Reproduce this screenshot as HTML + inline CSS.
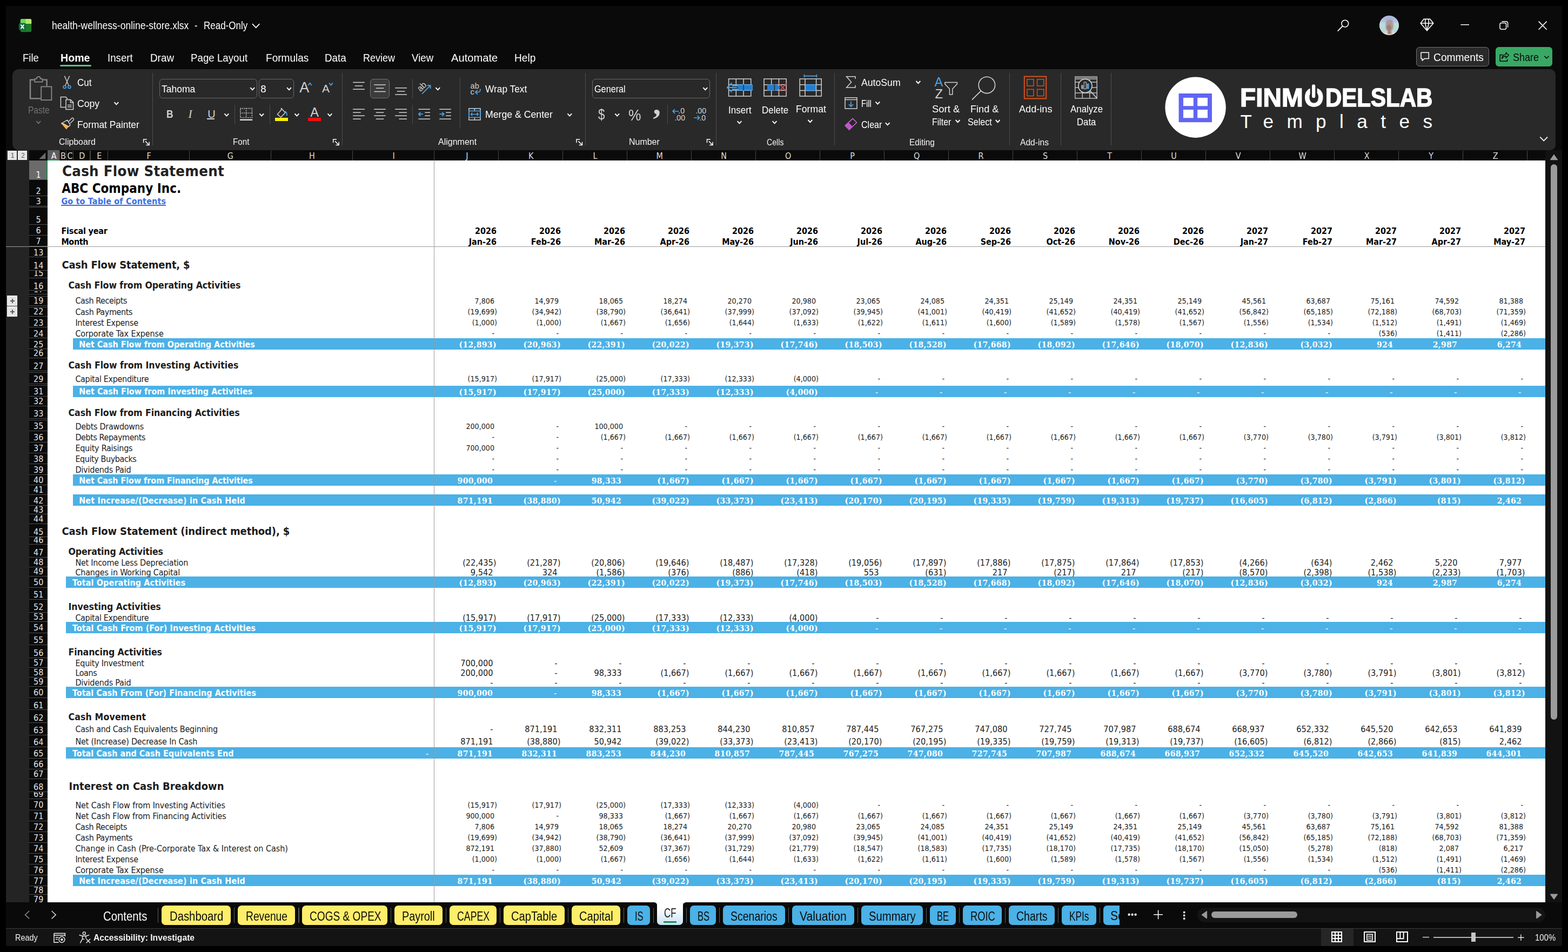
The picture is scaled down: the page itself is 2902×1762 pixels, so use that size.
<!DOCTYPE html>
<html lang="en"><head><meta charset="utf-8"><title>health-wellness-online-store.xlsx - Excel</title>
<style>
html,body{margin:0;padding:0;background:#000;}
body{width:2902px;height:1762px;overflow:hidden;position:relative;font-family:"Liberation Sans",sans-serif;}
#app div{position:absolute;white-space:pre;color:#fff;}
#app .t{font-family:"DejaVu Sans Condensed","Liberation Sans",sans-serif;}
#app .s{font-family:"DejaVu Serif Condensed","Liberation Serif",serif;}
#app .b{font-weight:700;}
#app svg{position:absolute;left:0;top:0;overflow:visible;}
#app{position:absolute;left:0;top:0;width:2902px;height:1762px;overflow:hidden;}

</style></head><body><div id="app">
<div style="left:11px;top:11px;width:2880px;height:1740px;background:#0a0a0a;"></div>
<div style="left:11px;top:278px;width:43px;height:1392px;background:#242424;"></div>
<div style="left:54px;top:278px;width:2808px;height:19px;background:#0a0a0a;"></div>
<div style="left:54px;top:297px;width:34px;height:1373px;background:#0a0a0a;"></div>
<div style="left:88px;top:278px;width:22px;height:19px;background:#5f5f5f;"></div>
<div style="left:88px;top:295px;width:22px;height:2px;background:#1f8a55;"></div>
<div class="t" style="left:94.68px;top:279px;line-height:19px;font-size:16px;">A</div>
<div style="left:109.4px;top:279px;width:1.2px;height:18px;background:#4a4a4a;"></div>
<div class="t" style="left:111.91px;top:279px;line-height:19px;font-size:16px;color:#dedede;">B</div>
<div style="left:121.9px;top:279px;width:1.2px;height:18px;background:#4a4a4a;"></div>
<div class="t" style="left:124.57px;top:279px;line-height:19px;font-size:16px;color:#dedede;">C</div>
<div style="left:134.9px;top:279px;width:1.2px;height:18px;background:#4a4a4a;"></div>
<div class="t" style="left:146.31px;top:279px;line-height:19px;font-size:16px;color:#dedede;">D</div>
<div style="left:166.4px;top:279px;width:1.2px;height:18px;background:#4a4a4a;"></div>
<div class="t" style="left:179.3px;top:279px;line-height:19px;font-size:16px;color:#dedede;">E</div>
<div style="left:198.9px;top:279px;width:1.2px;height:18px;background:#4a4a4a;"></div>
<div class="t" style="left:271.41px;top:279px;line-height:19px;font-size:16px;color:#dedede;">F</div>
<div style="left:349.8px;top:279px;width:1.2px;height:18px;background:#4a4a4a;"></div>
<div class="t" style="left:420.87px;top:279px;line-height:19px;font-size:16px;color:#dedede;">G</div>
<div style="left:500.7px;top:279px;width:1.2px;height:18px;background:#4a4a4a;"></div>
<div class="t" style="left:571.99px;top:279px;line-height:19px;font-size:16px;color:#dedede;">H</div>
<div style="left:651.7px;top:279px;width:1.2px;height:18px;background:#4a4a4a;"></div>
<div class="t" style="left:726.38px;top:279px;line-height:19px;font-size:16px;color:#dedede;">I</div>
<div style="left:802.9px;top:279px;width:1.2px;height:18px;background:#4a4a4a;"></div>
<div class="t" style="left:862.21px;top:279px;line-height:19px;font-size:16px;color:#dedede;">J</div>
<div style="left:921.9px;top:279px;width:1.2px;height:18px;background:#4a4a4a;"></div>
<div class="t" style="left:977.88px;top:279px;line-height:19px;font-size:16px;color:#dedede;">K</div>
<div style="left:1040.9px;top:279px;width:1.2px;height:18px;background:#4a4a4a;"></div>
<div class="t" style="left:1097.59px;top:279px;line-height:19px;font-size:16px;color:#dedede;">L</div>
<div style="left:1159.9px;top:279px;width:1.2px;height:18px;background:#4a4a4a;"></div>
<div class="t" style="left:1214.39px;top:279px;line-height:19px;font-size:16px;color:#dedede;">M</div>
<div style="left:1278.9px;top:279px;width:1.2px;height:18px;background:#4a4a4a;"></div>
<div class="t" style="left:1334.22px;top:279px;line-height:19px;font-size:16px;color:#dedede;">N</div>
<div style="left:1397.9px;top:279px;width:1.2px;height:18px;background:#4a4a4a;"></div>
<div class="t" style="left:1452.94px;top:279px;line-height:19px;font-size:16px;color:#dedede;">O</div>
<div style="left:1516.9px;top:279px;width:1.2px;height:18px;background:#4a4a4a;"></div>
<div class="t" style="left:1573.26px;top:279px;line-height:19px;font-size:16px;color:#dedede;">P</div>
<div style="left:1635.9px;top:279px;width:1.2px;height:18px;background:#4a4a4a;"></div>
<div class="t" style="left:1690.94px;top:279px;line-height:19px;font-size:16px;color:#dedede;">Q</div>
<div style="left:1754.9px;top:279px;width:1.2px;height:18px;background:#4a4a4a;"></div>
<div class="t" style="left:1810.6px;top:279px;line-height:19px;font-size:16px;color:#dedede;">R</div>
<div style="left:1873.9px;top:279px;width:1.2px;height:18px;background:#4a4a4a;"></div>
<div class="t" style="left:1930.03px;top:279px;line-height:19px;font-size:16px;color:#dedede;">S</div>
<div style="left:1992.9px;top:279px;width:1.2px;height:18px;background:#4a4a4a;"></div>
<div class="t" style="left:2049.24px;top:279px;line-height:19px;font-size:16px;color:#dedede;">T</div>
<div style="left:2111.9px;top:279px;width:1.2px;height:18px;background:#4a4a4a;"></div>
<div class="t" style="left:2167.33px;top:279px;line-height:19px;font-size:16px;color:#dedede;">U</div>
<div style="left:2230.9px;top:279px;width:1.2px;height:18px;background:#4a4a4a;"></div>
<div class="t" style="left:2286.68px;top:279px;line-height:19px;font-size:16px;color:#dedede;">V</div>
<div style="left:2349.9px;top:279px;width:1.2px;height:18px;background:#4a4a4a;"></div>
<div class="t" style="left:2403.48px;top:279px;line-height:19px;font-size:16px;color:#dedede;">W</div>
<div style="left:2468.9px;top:279px;width:1.2px;height:18px;background:#4a4a4a;"></div>
<div class="t" style="left:2524.67px;top:279px;line-height:19px;font-size:16px;color:#dedede;">X</div>
<div style="left:2587.9px;top:279px;width:1.2px;height:18px;background:#4a4a4a;"></div>
<div class="t" style="left:2644.23px;top:279px;line-height:19px;font-size:16px;color:#dedede;">Y</div>
<div style="left:2706.9px;top:279px;width:1.2px;height:18px;background:#4a4a4a;"></div>
<div class="t" style="left:2762.67px;top:279px;line-height:19px;font-size:16px;color:#dedede;">Z</div>
<div style="left:2825.9px;top:279px;width:1.2px;height:18px;background:#4a4a4a;"></div>
<div style="left:2861.4px;top:279px;width:1.2px;height:18px;background:#4a4a4a;"></div>
<div style="left:54px;top:297px;width:34px;height:36px;background:#6b6b6b;overflow:hidden"><div class="t" style="left:12.62px;top:17px;line-height:19px;font-size:16px;color:#fff">1</div></div>
<div style="left:54px;top:332px;width:34px;height:1px;background:#4e4e4e;"></div>
<div style="left:54px;top:333px;width:34px;height:30px;background:#0a0a0a;overflow:hidden"><div class="t" style="left:12.62px;top:11px;line-height:19px;font-size:16px;color:#e2e2e2">2</div></div>
<div style="left:54px;top:362px;width:34px;height:1px;background:#4e4e4e;"></div>
<div style="left:54px;top:363px;width:34px;height:19px;background:#0a0a0a;overflow:hidden"><div class="t" style="left:12.62px;top:0px;line-height:19px;font-size:16px;color:#e2e2e2">3</div></div>
<div style="left:54px;top:381px;width:34px;height:1px;background:#4e4e4e;"></div>
<div style="left:54px;top:382px;width:34px;height:2.5px;background:#0a0a0a;overflow:hidden"></div>
<div style="left:54px;top:383px;width:34px;height:1px;background:#4e4e4e;"></div>
<div style="left:54px;top:384.5px;width:34px;height:31.5px;background:#0a0a0a;overflow:hidden"><div class="t" style="left:12.62px;top:12.5px;line-height:19px;font-size:16px;color:#e2e2e2">5</div></div>
<div style="left:54px;top:415px;width:34px;height:1px;background:#4e4e4e;"></div>
<div style="left:54px;top:416px;width:34px;height:20px;background:#0a0a0a;overflow:hidden"><div class="t" style="left:12.62px;top:1px;line-height:19px;font-size:16px;color:#e2e2e2">6</div></div>
<div style="left:54px;top:435px;width:34px;height:1px;background:#4e4e4e;"></div>
<div style="left:54px;top:436px;width:34px;height:20px;background:#0a0a0a;overflow:hidden"><div class="t" style="left:12.62px;top:1px;line-height:19px;font-size:16px;color:#e2e2e2">7</div></div>
<div style="left:54px;top:455px;width:34px;height:1px;background:#4e4e4e;"></div>
<div style="left:54px;top:457px;width:34px;height:19.5px;background:#0a0a0a;overflow:hidden"><div class="t" style="left:8.04px;top:0.5px;line-height:19px;font-size:16px;color:#e2e2e2">13</div></div>
<div style="left:54px;top:475px;width:34px;height:1px;background:#4e4e4e;"></div>
<div style="left:54px;top:476.5px;width:34px;height:24.5px;background:#0a0a0a;overflow:hidden"><div class="t" style="left:8.04px;top:5.5px;line-height:19px;font-size:16px;color:#e2e2e2">14</div></div>
<div style="left:54px;top:500px;width:34px;height:1px;background:#4e4e4e;"></div>
<div style="left:54px;top:501px;width:34px;height:14px;background:#0a0a0a;overflow:hidden"><div class="t" style="left:8.04px;top:-5px;line-height:19px;font-size:16px;color:#e2e2e2">15</div></div>
<div style="left:54px;top:514px;width:34px;height:1px;background:#4e4e4e;"></div>
<div style="left:54px;top:515px;width:34px;height:23.5px;background:#0a0a0a;overflow:hidden"><div class="t" style="left:8.04px;top:4.5px;line-height:19px;font-size:16px;color:#e2e2e2">16</div></div>
<div style="left:54px;top:537px;width:34px;height:1px;background:#4e4e4e;"></div>
<div style="left:54px;top:538.5px;width:34px;height:6.5px;background:#0a0a0a;overflow:hidden"><div class="t" style="left:8.04px;top:-12.5px;line-height:19px;font-size:16px;color:#e2e2e2">17</div></div>
<div style="left:54px;top:544px;width:34px;height:1px;background:#4e4e4e;"></div>
<div style="left:54px;top:546px;width:34px;height:20.3px;background:#0a0a0a;overflow:hidden"><div class="t" style="left:8.04px;top:1.3px;line-height:19px;font-size:16px;color:#e2e2e2">19</div></div>
<div style="left:54px;top:565px;width:34px;height:1px;background:#4e4e4e;"></div>
<div style="left:54px;top:566.3px;width:34px;height:20.2px;background:#0a0a0a;overflow:hidden"><div class="t" style="left:8.04px;top:1.2px;line-height:19px;font-size:16px;color:#e2e2e2">22</div></div>
<div style="left:54px;top:585px;width:34px;height:1px;background:#4e4e4e;"></div>
<div style="left:54px;top:586.5px;width:34px;height:20px;background:#0a0a0a;overflow:hidden"><div class="t" style="left:8.04px;top:1px;line-height:19px;font-size:16px;color:#e2e2e2">23</div></div>
<div style="left:54px;top:605px;width:34px;height:1px;background:#4e4e4e;"></div>
<div style="left:54px;top:606.5px;width:34px;height:20px;background:#0a0a0a;overflow:hidden"><div class="t" style="left:8.04px;top:1px;line-height:19px;font-size:16px;color:#e2e2e2">24</div></div>
<div style="left:54px;top:625px;width:34px;height:1px;background:#4e4e4e;"></div>
<div style="left:54px;top:626.5px;width:34px;height:20px;background:#0a0a0a;overflow:hidden"><div class="t" style="left:8.04px;top:1px;line-height:19px;font-size:16px;color:#e2e2e2">25</div></div>
<div style="left:54px;top:645px;width:34px;height:1px;background:#4e4e4e;"></div>
<div style="left:54px;top:646.5px;width:34px;height:16.9px;background:#0a0a0a;overflow:hidden"><div class="t" style="left:8.04px;top:-2.1px;line-height:19px;font-size:16px;color:#e2e2e2">26</div></div>
<div style="left:54px;top:662px;width:34px;height:1px;background:#4e4e4e;"></div>
<div style="left:54px;top:663.4px;width:34px;height:23.8px;background:#0a0a0a;overflow:hidden"><div class="t" style="left:8.04px;top:4.8px;line-height:19px;font-size:16px;color:#e2e2e2">27</div></div>
<div style="left:54px;top:686px;width:34px;height:1px;background:#4e4e4e;"></div>
<div style="left:54px;top:687.2px;width:34px;height:3.3px;background:#0a0a0a;overflow:hidden"></div>
<div style="left:54px;top:689px;width:34px;height:1px;background:#4e4e4e;"></div>
<div style="left:54px;top:690.5px;width:34px;height:20.1px;background:#0a0a0a;overflow:hidden"><div class="t" style="left:8.04px;top:1.1px;line-height:19px;font-size:16px;color:#e2e2e2">29</div></div>
<div style="left:54px;top:710px;width:34px;height:1px;background:#4e4e4e;"></div>
<div style="left:54px;top:710.6px;width:34px;height:3.7px;background:#0a0a0a;overflow:hidden"></div>
<div style="left:54px;top:713px;width:34px;height:1px;background:#4e4e4e;"></div>
<div style="left:54px;top:714.3px;width:34px;height:20.2px;background:#0a0a0a;overflow:hidden"><div class="t" style="left:8.04px;top:1.2px;line-height:19px;font-size:16px;color:#e2e2e2">31</div></div>
<div style="left:54px;top:733px;width:34px;height:1px;background:#4e4e4e;"></div>
<div style="left:54px;top:734.5px;width:34px;height:17.1px;background:#0a0a0a;overflow:hidden"><div class="t" style="left:8.04px;top:-1.9px;line-height:19px;font-size:16px;color:#e2e2e2">32</div></div>
<div style="left:54px;top:751px;width:34px;height:1px;background:#4e4e4e;"></div>
<div style="left:54px;top:751.6px;width:34px;height:23.1px;background:#0a0a0a;overflow:hidden"><div class="t" style="left:8.04px;top:4.1px;line-height:19px;font-size:16px;color:#e2e2e2">33</div></div>
<div style="left:54px;top:774px;width:34px;height:1px;background:#4e4e4e;"></div>
<div style="left:54px;top:774.7px;width:34px;height:3.7px;background:#0a0a0a;overflow:hidden"></div>
<div style="left:54px;top:777px;width:34px;height:1px;background:#4e4e4e;"></div>
<div style="left:54px;top:778.4px;width:34px;height:20.1px;background:#0a0a0a;overflow:hidden"><div class="t" style="left:8.04px;top:1.1px;line-height:19px;font-size:16px;color:#e2e2e2">35</div></div>
<div style="left:54px;top:797px;width:34px;height:1px;background:#4e4e4e;"></div>
<div style="left:54px;top:798.5px;width:34px;height:20.2px;background:#0a0a0a;overflow:hidden"><div class="t" style="left:8.04px;top:1.2px;line-height:19px;font-size:16px;color:#e2e2e2">36</div></div>
<div style="left:54px;top:818px;width:34px;height:1px;background:#4e4e4e;"></div>
<div style="left:54px;top:818.7px;width:34px;height:20px;background:#0a0a0a;overflow:hidden"><div class="t" style="left:8.04px;top:1px;line-height:19px;font-size:16px;color:#e2e2e2">37</div></div>
<div style="left:54px;top:838px;width:34px;height:1px;background:#4e4e4e;"></div>
<div style="left:54px;top:838.7px;width:34px;height:20px;background:#0a0a0a;overflow:hidden"><div class="t" style="left:8.04px;top:1px;line-height:19px;font-size:16px;color:#e2e2e2">38</div></div>
<div style="left:54px;top:858px;width:34px;height:1px;background:#4e4e4e;"></div>
<div style="left:54px;top:858.7px;width:34px;height:19.9px;background:#0a0a0a;overflow:hidden"><div class="t" style="left:8.04px;top:0.9px;line-height:19px;font-size:16px;color:#e2e2e2">39</div></div>
<div style="left:54px;top:878px;width:34px;height:1px;background:#4e4e4e;"></div>
<div style="left:54px;top:878.6px;width:34px;height:19.9px;background:#0a0a0a;overflow:hidden"><div class="t" style="left:8.04px;top:0.9px;line-height:19px;font-size:16px;color:#e2e2e2">40</div></div>
<div style="left:54px;top:897px;width:34px;height:1px;background:#4e4e4e;"></div>
<div style="left:54px;top:898.5px;width:34px;height:17.1px;background:#0a0a0a;overflow:hidden"><div class="t" style="left:8.04px;top:-1.9px;line-height:19px;font-size:16px;color:#e2e2e2">41</div></div>
<div style="left:54px;top:915px;width:34px;height:1px;background:#4e4e4e;"></div>
<div style="left:54px;top:915.6px;width:34px;height:20.1px;background:#0a0a0a;overflow:hidden"><div class="t" style="left:8.04px;top:1.1px;line-height:19px;font-size:16px;color:#e2e2e2">42</div></div>
<div style="left:54px;top:935px;width:34px;height:1px;background:#4e4e4e;"></div>
<div style="left:54px;top:935.7px;width:34px;height:16.8px;background:#0a0a0a;overflow:hidden"><div class="t" style="left:8.04px;top:-2.2px;line-height:19px;font-size:16px;color:#e2e2e2">43</div></div>
<div style="left:54px;top:951px;width:34px;height:1px;background:#4e4e4e;"></div>
<div style="left:54px;top:952.5px;width:34px;height:17px;background:#0a0a0a;overflow:hidden"><div class="t" style="left:8.04px;top:-2px;line-height:19px;font-size:16px;color:#e2e2e2">44</div></div>
<div style="left:54px;top:969px;width:34px;height:1px;background:#4e4e4e;"></div>
<div style="left:54px;top:969.5px;width:34px;height:24.4px;background:#0a0a0a;overflow:hidden"><div class="t" style="left:8.04px;top:5.4px;line-height:19px;font-size:16px;color:#e2e2e2">45</div></div>
<div style="left:54px;top:993px;width:34px;height:1px;background:#4e4e4e;"></div>
<div style="left:54px;top:993.9px;width:34px;height:14.6px;background:#0a0a0a;overflow:hidden"><div class="t" style="left:8.04px;top:-4.4px;line-height:19px;font-size:16px;color:#e2e2e2">46</div></div>
<div style="left:54px;top:1007px;width:34px;height:1px;background:#4e4e4e;"></div>
<div style="left:54px;top:1008.5px;width:34px;height:23px;background:#0a0a0a;overflow:hidden"><div class="t" style="left:8.04px;top:4px;line-height:19px;font-size:16px;color:#e2e2e2">47</div></div>
<div style="left:54px;top:1031px;width:34px;height:1px;background:#4e4e4e;"></div>
<div style="left:54px;top:1031.5px;width:34px;height:18px;background:#0a0a0a;overflow:hidden"><div class="t" style="left:8.04px;top:-1px;line-height:19px;font-size:16px;color:#e2e2e2">48</div></div>
<div style="left:54px;top:1049px;width:34px;height:1px;background:#4e4e4e;"></div>
<div style="left:54px;top:1049.5px;width:34px;height:17.9px;background:#0a0a0a;overflow:hidden"><div class="t" style="left:8.04px;top:-1.1px;line-height:19px;font-size:16px;color:#e2e2e2">49</div></div>
<div style="left:54px;top:1066px;width:34px;height:1px;background:#4e4e4e;"></div>
<div style="left:54px;top:1067.4px;width:34px;height:20.1px;background:#0a0a0a;overflow:hidden"><div class="t" style="left:8.04px;top:1.1px;line-height:19px;font-size:16px;color:#e2e2e2">50</div></div>
<div style="left:54px;top:1087px;width:34px;height:1px;background:#4e4e4e;"></div>
<div style="left:54px;top:1087.5px;width:34px;height:22.8px;background:#0a0a0a;overflow:hidden"><div class="t" style="left:8.04px;top:3.8px;line-height:19px;font-size:16px;color:#e2e2e2">51</div></div>
<div style="left:54px;top:1109px;width:34px;height:1px;background:#4e4e4e;"></div>
<div style="left:54px;top:1110.3px;width:34px;height:23.2px;background:#0a0a0a;overflow:hidden"><div class="t" style="left:8.04px;top:4.2px;line-height:19px;font-size:16px;color:#e2e2e2">52</div></div>
<div style="left:54px;top:1133px;width:34px;height:1px;background:#4e4e4e;"></div>
<div style="left:54px;top:1133.5px;width:34px;height:17.8px;background:#0a0a0a;overflow:hidden"><div class="t" style="left:8.04px;top:-1.2px;line-height:19px;font-size:16px;color:#e2e2e2">53</div></div>
<div style="left:54px;top:1150px;width:34px;height:1px;background:#4e4e4e;"></div>
<div style="left:54px;top:1151.3px;width:34px;height:20.2px;background:#0a0a0a;overflow:hidden"><div class="t" style="left:8.04px;top:1.2px;line-height:19px;font-size:16px;color:#e2e2e2">54</div></div>
<div style="left:54px;top:1171px;width:34px;height:1px;background:#4e4e4e;"></div>
<div style="left:54px;top:1171.5px;width:34px;height:22.9px;background:#0a0a0a;overflow:hidden"><div class="t" style="left:8.04px;top:3.9px;line-height:19px;font-size:16px;color:#e2e2e2">55</div></div>
<div style="left:54px;top:1193px;width:34px;height:1px;background:#4e4e4e;"></div>
<div style="left:54px;top:1194.4px;width:34px;height:23.2px;background:#0a0a0a;overflow:hidden"><div class="t" style="left:8.04px;top:4.2px;line-height:19px;font-size:16px;color:#e2e2e2">56</div></div>
<div style="left:54px;top:1217px;width:34px;height:1px;background:#4e4e4e;"></div>
<div style="left:54px;top:1217.6px;width:34px;height:18.1px;background:#0a0a0a;overflow:hidden"><div class="t" style="left:8.04px;top:-0.9px;line-height:19px;font-size:16px;color:#e2e2e2">57</div></div>
<div style="left:54px;top:1235px;width:34px;height:1px;background:#4e4e4e;"></div>
<div style="left:54px;top:1235.7px;width:34px;height:17.9px;background:#0a0a0a;overflow:hidden"><div class="t" style="left:8.04px;top:-1.1px;line-height:19px;font-size:16px;color:#e2e2e2">58</div></div>
<div style="left:54px;top:1253px;width:34px;height:1px;background:#4e4e4e;"></div>
<div style="left:54px;top:1253.6px;width:34px;height:17.7px;background:#0a0a0a;overflow:hidden"><div class="t" style="left:8.04px;top:-1.3px;line-height:19px;font-size:16px;color:#e2e2e2">59</div></div>
<div style="left:54px;top:1270px;width:34px;height:1px;background:#4e4e4e;"></div>
<div style="left:54px;top:1271.3px;width:34px;height:20.2px;background:#0a0a0a;overflow:hidden"><div class="t" style="left:8.04px;top:1.2px;line-height:19px;font-size:16px;color:#e2e2e2">60</div></div>
<div style="left:54px;top:1291px;width:34px;height:1px;background:#4e4e4e;"></div>
<div style="left:54px;top:1291.5px;width:34px;height:23px;background:#0a0a0a;overflow:hidden"><div class="t" style="left:8.04px;top:4px;line-height:19px;font-size:16px;color:#e2e2e2">61</div></div>
<div style="left:54px;top:1313px;width:34px;height:1px;background:#4e4e4e;"></div>
<div style="left:54px;top:1314.5px;width:34px;height:23.2px;background:#0a0a0a;overflow:hidden"><div class="t" style="left:8.04px;top:4.2px;line-height:19px;font-size:16px;color:#e2e2e2">62</div></div>
<div style="left:54px;top:1337px;width:34px;height:1px;background:#4e4e4e;"></div>
<div style="left:54px;top:1337.7px;width:34px;height:23.1px;background:#0a0a0a;overflow:hidden"><div class="t" style="left:8.04px;top:4.1px;line-height:19px;font-size:16px;color:#e2e2e2">63</div></div>
<div style="left:54px;top:1360px;width:34px;height:1px;background:#4e4e4e;"></div>
<div style="left:54px;top:1360.8px;width:34px;height:22.4px;background:#0a0a0a;overflow:hidden"><div class="t" style="left:8.04px;top:3.4px;line-height:19px;font-size:16px;color:#e2e2e2">64</div></div>
<div style="left:54px;top:1382px;width:34px;height:1px;background:#4e4e4e;"></div>
<div style="left:54px;top:1383.2px;width:34px;height:20.4px;background:#0a0a0a;overflow:hidden"><div class="t" style="left:8.04px;top:1.4px;line-height:19px;font-size:16px;color:#e2e2e2">65</div></div>
<div style="left:54px;top:1403px;width:34px;height:1px;background:#4e4e4e;"></div>
<div style="left:54px;top:1403.6px;width:34px;height:20.8px;background:#0a0a0a;overflow:hidden"><div class="t" style="left:8.04px;top:1.8px;line-height:19px;font-size:16px;color:#e2e2e2">66</div></div>
<div style="left:54px;top:1423px;width:34px;height:1px;background:#4e4e4e;"></div>
<div style="left:54px;top:1424.4px;width:34px;height:17.3px;background:#0a0a0a;overflow:hidden"><div class="t" style="left:8.04px;top:-1.7px;line-height:19px;font-size:16px;color:#e2e2e2">67</div></div>
<div style="left:54px;top:1441px;width:34px;height:1px;background:#4e4e4e;"></div>
<div style="left:54px;top:1441.7px;width:34px;height:24.6px;background:#0a0a0a;overflow:hidden"><div class="t" style="left:8.04px;top:5.6px;line-height:19px;font-size:16px;color:#e2e2e2">68</div></div>
<div style="left:54px;top:1465px;width:34px;height:1px;background:#4e4e4e;"></div>
<div style="left:54px;top:1466.3px;width:34px;height:13.1px;background:#0a0a0a;overflow:hidden"><div class="t" style="left:8.04px;top:-5.9px;line-height:19px;font-size:16px;color:#e2e2e2">69</div></div>
<div style="left:54px;top:1478px;width:34px;height:1px;background:#4e4e4e;"></div>
<div style="left:54px;top:1479.4px;width:34px;height:20.1px;background:#0a0a0a;overflow:hidden"><div class="t" style="left:8.04px;top:1.1px;line-height:19px;font-size:16px;color:#e2e2e2">70</div></div>
<div style="left:54px;top:1499px;width:34px;height:1px;background:#4e4e4e;"></div>
<div style="left:54px;top:1499.5px;width:34px;height:20px;background:#0a0a0a;overflow:hidden"><div class="t" style="left:8.04px;top:1px;line-height:19px;font-size:16px;color:#e2e2e2">71</div></div>
<div style="left:54px;top:1519px;width:34px;height:1px;background:#4e4e4e;"></div>
<div style="left:54px;top:1519.5px;width:34px;height:20px;background:#0a0a0a;overflow:hidden"><div class="t" style="left:8.04px;top:1px;line-height:19px;font-size:16px;color:#e2e2e2">72</div></div>
<div style="left:54px;top:1539px;width:34px;height:1px;background:#4e4e4e;"></div>
<div style="left:54px;top:1539.5px;width:34px;height:20px;background:#0a0a0a;overflow:hidden"><div class="t" style="left:8.04px;top:1px;line-height:19px;font-size:16px;color:#e2e2e2">73</div></div>
<div style="left:54px;top:1559px;width:34px;height:1px;background:#4e4e4e;"></div>
<div style="left:54px;top:1559.5px;width:34px;height:20px;background:#0a0a0a;overflow:hidden"><div class="t" style="left:8.04px;top:1px;line-height:19px;font-size:16px;color:#e2e2e2">74</div></div>
<div style="left:54px;top:1579px;width:34px;height:1px;background:#4e4e4e;"></div>
<div style="left:54px;top:1579.5px;width:34px;height:20px;background:#0a0a0a;overflow:hidden"><div class="t" style="left:8.04px;top:1px;line-height:19px;font-size:16px;color:#e2e2e2">75</div></div>
<div style="left:54px;top:1599px;width:34px;height:1px;background:#4e4e4e;"></div>
<div style="left:54px;top:1599.5px;width:34px;height:20px;background:#0a0a0a;overflow:hidden"><div class="t" style="left:8.04px;top:1px;line-height:19px;font-size:16px;color:#e2e2e2">76</div></div>
<div style="left:54px;top:1619px;width:34px;height:1px;background:#4e4e4e;"></div>
<div style="left:54px;top:1619.5px;width:34px;height:20.1px;background:#0a0a0a;overflow:hidden"><div class="t" style="left:8.04px;top:1.1px;line-height:19px;font-size:16px;color:#e2e2e2">77</div></div>
<div style="left:54px;top:1639px;width:34px;height:1px;background:#4e4e4e;"></div>
<div style="left:54px;top:1639.6px;width:34px;height:16.9px;background:#0a0a0a;overflow:hidden"><div class="t" style="left:8.04px;top:-2.1px;line-height:19px;font-size:16px;color:#e2e2e2">78</div></div>
<div style="left:54px;top:1655px;width:34px;height:1px;background:#4e4e4e;"></div>
<div style="left:54px;top:1656.5px;width:34px;height:13.5px;background:#0a0a0a;overflow:hidden"><div class="t" style="left:8.04px;top:-1.9px;line-height:19px;font-size:16px;color:#e2e2e2">79</div></div>
<div style="left:86px;top:297px;width:2px;height:36px;background:#1f8a55;"></div>
<div style="left:13.5px;top:278.5px;width:17.3px;height:17.8px;background:#e6e6e6;border:1px solid #fafafa;box-sizing:border-box;"></div>
<div style="left:19.7px;top:281px;line-height:14px;font-size:12px;color:#555;">1</div>
<div style="left:33px;top:278.5px;width:17.3px;height:17.8px;background:#e6e6e6;border:1px solid #fafafa;box-sizing:border-box;"></div>
<div style="left:39.2px;top:281px;line-height:14px;font-size:12px;color:#555;">2</div>
<div style="left:13px;top:547px;width:19px;height:19px;background:#e4e4e4;border:1px solid #fbfbfb;box-sizing:border-box;"></div>
<div style="left:18.5px;top:555.5px;width:8px;height:2px;background:#5c5c5c;"></div>
<div style="left:21.5px;top:552.5px;width:2px;height:8px;background:#5c5c5c;"></div>
<div style="left:13px;top:567px;width:19px;height:19px;background:#e4e4e4;border:1px solid #fbfbfb;box-sizing:border-box;"></div>
<div style="left:18.5px;top:575.5px;width:8px;height:2px;background:#5c5c5c;"></div>
<div style="left:21.5px;top:572.5px;width:2px;height:8px;background:#5c5c5c;"></div>
<div style="left:54px;top:548px;width:34px;height:1px;background:#4e4e4e;"></div>
<div style="left:54px;top:568px;width:34px;height:1px;background:#4e4e4e;"></div>
<svg width="2902" height="1762"><path d="M84.3 282.2V294.2H72.3Z" fill="#6a6a6a"/></svg>
<div style="left:88px;top:297px;width:2772px;height:1373px;background:#fff;"></div>
<div style="left:135px;top:626px;width:2725px;height:21px;background:#4bb1e6;"></div>
<div style="left:135px;top:714px;width:2725px;height:21px;background:#4bb1e6;"></div>
<div style="left:135px;top:878px;width:2725px;height:21px;background:#4bb1e6;"></div>
<div style="left:135px;top:915px;width:2725px;height:21px;background:#4bb1e6;"></div>
<div style="left:122px;top:1067px;width:2738px;height:21px;background:#4bb1e6;"></div>
<div style="left:122px;top:1151px;width:2738px;height:21px;background:#4bb1e6;"></div>
<div style="left:122px;top:1271px;width:2738px;height:21px;background:#4bb1e6;"></div>
<div style="left:122px;top:1383px;width:2738px;height:21px;background:#4bb1e6;"></div>
<div style="left:135px;top:1619px;width:2725px;height:21px;background:#4bb1e6;"></div>
<div style="left:802.9px;top:297px;width:1.2px;height:1373px;background:#9c9c9c;"></div>
<div style="left:11px;top:455.7px;width:2849px;height:1.3px;background:#9c9c9c;"></div>
<div class="t b" style="left:115px;top:301px;line-height:31px;font-size:27.4px;color:#222;letter-spacing:0.24px;">Cash Flow Statement</div>
<div class="t b" style="left:114.2px;top:335px;line-height:28px;font-size:24px;color:#000;letter-spacing:-0.01px;">ABC Company Inc.</div>
<div class="t b" style="left:113.4px;top:418px;line-height:19px;font-size:16px;color:#000;letter-spacing:-0.2px;">Fiscal year</div>
<div class="t b" style="left:113.4px;top:438px;line-height:19px;font-size:16px;color:#000;letter-spacing:-0.35px;">Month</div>
<div class="t b" style="left:114.4px;top:478px;line-height:24px;font-size:20px;color:#1c1c1c;letter-spacing:-0.2px;">Cash Flow Statement, $</div>
<div class="t b" style="left:126.5px;top:518px;line-height:20px;font-size:17.6px;color:#1c1c1c;letter-spacing:-0.09px;">Cash Flow from Operating Activities</div>
<div class="t b" style="left:126.5px;top:666px;line-height:20px;font-size:17.6px;color:#1c1c1c;letter-spacing:-0.02px;">Cash Flow from Investing Activities</div>
<div class="t b" style="left:126.5px;top:754px;line-height:20px;font-size:17.6px;color:#1c1c1c;letter-spacing:-0.06px;">Cash Flow from Financing Activities</div>
<div class="t b" style="left:114.4px;top:971px;line-height:24px;font-size:20px;color:#1c1c1c;letter-spacing:-0.11px;">Cash Flow Statement (indirect method), $</div>
<div class="t b" style="left:126.5px;top:1011px;line-height:20px;font-size:17.6px;color:#1c1c1c;letter-spacing:-0.17px;">Operating Activities</div>
<div class="t b" style="left:126.5px;top:1113px;line-height:20px;font-size:17.6px;color:#1c1c1c;letter-spacing:-0.05px;">Investing Activities</div>
<div class="t b" style="left:126.5px;top:1197px;line-height:20px;font-size:17.6px;color:#1c1c1c;letter-spacing:-0.13px;">Financing Activities</div>
<div class="t b" style="left:126.5px;top:1317px;line-height:20px;font-size:17.6px;color:#1c1c1c;letter-spacing:0.12px;">Cash Movement</div>
<div class="t b" style="left:127.6px;top:1443px;line-height:24px;font-size:20px;color:#1c1c1c;letter-spacing:-0.01px;">Interest on Cash Breakdown</div>
<div class="t b" style="left:113.4px;top:363px;line-height:19px;font-size:16px;color:#3a6fe2;letter-spacing:0.16px;">Go to Table of Contents</div>
<div style="left:113.2px;top:379.4px;width:194.2px;height:1.7px;background:#3a6fe2;"></div>
<div class="t b" style="left:879.04px;top:418px;line-height:19px;font-size:16px;color:#000;">2026</div>
<div class="t b" style="left:867.78px;top:438px;line-height:19px;font-size:16px;color:#000;">Jan-26</div>
<div class="t b" style="left:998.04px;top:418px;line-height:19px;font-size:16px;color:#000;">2026</div>
<div class="t b" style="left:982.84px;top:438px;line-height:19px;font-size:16px;color:#000;">Feb-26</div>
<div class="t b" style="left:1117.04px;top:418px;line-height:19px;font-size:16px;color:#000;">2026</div>
<div class="t b" style="left:1099.95px;top:438px;line-height:19px;font-size:16px;color:#000;">Mar-26</div>
<div class="t b" style="left:1236.04px;top:418px;line-height:19px;font-size:16px;color:#000;">2026</div>
<div class="t b" style="left:1221.55px;top:438px;line-height:19px;font-size:16px;color:#000;">Apr-26</div>
<div class="t b" style="left:1355.04px;top:418px;line-height:19px;font-size:16px;color:#000;">2026</div>
<div class="t b" style="left:1336.16px;top:438px;line-height:19px;font-size:16px;color:#000;">May-26</div>
<div class="t b" style="left:1474.04px;top:418px;line-height:19px;font-size:16px;color:#000;">2026</div>
<div class="t b" style="left:1462.24px;top:438px;line-height:19px;font-size:16px;color:#000;">Jun-26</div>
<div class="t b" style="left:1593.04px;top:418px;line-height:19px;font-size:16px;color:#000;">2026</div>
<div class="t b" style="left:1586.56px;top:438px;line-height:19px;font-size:16px;color:#000;">Jul-26</div>
<div class="t b" style="left:1712.04px;top:418px;line-height:19px;font-size:16px;color:#000;">2026</div>
<div class="t b" style="left:1694.4px;top:438px;line-height:19px;font-size:16px;color:#000;">Aug-26</div>
<div class="t b" style="left:1831.04px;top:418px;line-height:19px;font-size:16px;color:#000;">2026</div>
<div class="t b" style="left:1814.65px;top:438px;line-height:19px;font-size:16px;color:#000;">Sep-26</div>
<div class="t b" style="left:1950.04px;top:418px;line-height:19px;font-size:16px;color:#000;">2026</div>
<div class="t b" style="left:1936.44px;top:438px;line-height:19px;font-size:16px;color:#000;">Oct-26</div>
<div class="t b" style="left:2069.04px;top:418px;line-height:19px;font-size:16px;color:#000;">2026</div>
<div class="t b" style="left:2051.77px;top:438px;line-height:19px;font-size:16px;color:#000;">Nov-26</div>
<div class="t b" style="left:2188.04px;top:418px;line-height:19px;font-size:16px;color:#000;">2026</div>
<div class="t b" style="left:2171.84px;top:438px;line-height:19px;font-size:16px;color:#000;">Dec-26</div>
<div class="t b" style="left:2307.04px;top:418px;line-height:19px;font-size:16px;color:#000;">2027</div>
<div class="t b" style="left:2295.78px;top:438px;line-height:19px;font-size:16px;color:#000;">Jan-27</div>
<div class="t b" style="left:2426.04px;top:418px;line-height:19px;font-size:16px;color:#000;">2027</div>
<div class="t b" style="left:2410.84px;top:438px;line-height:19px;font-size:16px;color:#000;">Feb-27</div>
<div class="t b" style="left:2545.04px;top:418px;line-height:19px;font-size:16px;color:#000;">2027</div>
<div class="t b" style="left:2527.95px;top:438px;line-height:19px;font-size:16px;color:#000;">Mar-27</div>
<div class="t b" style="left:2664.04px;top:418px;line-height:19px;font-size:16px;color:#000;">2027</div>
<div class="t b" style="left:2649.55px;top:438px;line-height:19px;font-size:16px;color:#000;">Apr-27</div>
<div class="t b" style="left:2783.04px;top:418px;line-height:19px;font-size:16px;color:#000;">2027</div>
<div class="t b" style="left:2764.16px;top:438px;line-height:19px;font-size:16px;color:#000;">May-27</div>
<div class="t" style="left:139.4px;top:547px;line-height:19px;font-size:16px;color:#1c1c1c;letter-spacing:-0.44px;">Cash Receipts</div>
<div class="t" style="left:878.57px;top:549px;line-height:16px;font-size:14.15px;color:#1c1c1c;">7,806</div>
<div class="t" style="left:989.47px;top:549px;line-height:16px;font-size:14.15px;color:#1c1c1c;">14,979</div>
<div class="t" style="left:1108.47px;top:549px;line-height:16px;font-size:14.15px;color:#1c1c1c;">18,065</div>
<div class="t" style="left:1227.47px;top:549px;line-height:16px;font-size:14.15px;color:#1c1c1c;">18,274</div>
<div class="t" style="left:1346.47px;top:549px;line-height:16px;font-size:14.15px;color:#1c1c1c;">20,270</div>
<div class="t" style="left:1465.47px;top:549px;line-height:16px;font-size:14.15px;color:#1c1c1c;">20,980</div>
<div class="t" style="left:1584.47px;top:549px;line-height:16px;font-size:14.15px;color:#1c1c1c;">23,065</div>
<div class="t" style="left:1703.47px;top:549px;line-height:16px;font-size:14.15px;color:#1c1c1c;">24,085</div>
<div class="t" style="left:1822.47px;top:549px;line-height:16px;font-size:14.15px;color:#1c1c1c;">24,351</div>
<div class="t" style="left:1941.47px;top:549px;line-height:16px;font-size:14.15px;color:#1c1c1c;">25,149</div>
<div class="t" style="left:2060.47px;top:549px;line-height:16px;font-size:14.15px;color:#1c1c1c;">24,351</div>
<div class="t" style="left:2179.47px;top:549px;line-height:16px;font-size:14.15px;color:#1c1c1c;">25,149</div>
<div class="t" style="left:2298.47px;top:549px;line-height:16px;font-size:14.15px;color:#1c1c1c;">45,561</div>
<div class="t" style="left:2417.47px;top:549px;line-height:16px;font-size:14.15px;color:#1c1c1c;">63,687</div>
<div class="t" style="left:2536.47px;top:549px;line-height:16px;font-size:14.15px;color:#1c1c1c;">75,161</div>
<div class="t" style="left:2655.47px;top:549px;line-height:16px;font-size:14.15px;color:#1c1c1c;">74,592</div>
<div class="t" style="left:2774.47px;top:549px;line-height:16px;font-size:14.15px;color:#1c1c1c;">81,388</div>
<div class="t" style="left:139.4px;top:568px;line-height:19px;font-size:16px;color:#1c1c1c;letter-spacing:-0.36px;">Cash Payments</div>
<div class="t" style="left:865.54px;top:569px;line-height:16px;font-size:14.15px;color:#1c1c1c;">(19,699)</div>
<div class="t" style="left:984.54px;top:569px;line-height:16px;font-size:14.15px;color:#1c1c1c;">(34,942)</div>
<div class="t" style="left:1103.54px;top:569px;line-height:16px;font-size:14.15px;color:#1c1c1c;">(38,790)</div>
<div class="t" style="left:1222.54px;top:569px;line-height:16px;font-size:14.15px;color:#1c1c1c;">(36,641)</div>
<div class="t" style="left:1341.54px;top:569px;line-height:16px;font-size:14.15px;color:#1c1c1c;">(37,999)</div>
<div class="t" style="left:1460.54px;top:569px;line-height:16px;font-size:14.15px;color:#1c1c1c;">(37,092)</div>
<div class="t" style="left:1579.54px;top:569px;line-height:16px;font-size:14.15px;color:#1c1c1c;">(39,945)</div>
<div class="t" style="left:1698.54px;top:569px;line-height:16px;font-size:14.15px;color:#1c1c1c;">(41,001)</div>
<div class="t" style="left:1817.54px;top:569px;line-height:16px;font-size:14.15px;color:#1c1c1c;">(40,419)</div>
<div class="t" style="left:1936.54px;top:569px;line-height:16px;font-size:14.15px;color:#1c1c1c;">(41,652)</div>
<div class="t" style="left:2055.54px;top:569px;line-height:16px;font-size:14.15px;color:#1c1c1c;">(40,419)</div>
<div class="t" style="left:2174.54px;top:569px;line-height:16px;font-size:14.15px;color:#1c1c1c;">(41,652)</div>
<div class="t" style="left:2293.54px;top:569px;line-height:16px;font-size:14.15px;color:#1c1c1c;">(56,842)</div>
<div class="t" style="left:2412.54px;top:569px;line-height:16px;font-size:14.15px;color:#1c1c1c;">(65,185)</div>
<div class="t" style="left:2531.54px;top:569px;line-height:16px;font-size:14.15px;color:#1c1c1c;">(72,188)</div>
<div class="t" style="left:2650.54px;top:569px;line-height:16px;font-size:14.15px;color:#1c1c1c;">(68,703)</div>
<div class="t" style="left:2769.54px;top:569px;line-height:16px;font-size:14.15px;color:#1c1c1c;">(71,359)</div>
<div class="t" style="left:139.4px;top:588px;line-height:19px;font-size:16px;color:#1c1c1c;letter-spacing:-0.3px;">Interest Expense</div>
<div class="t" style="left:873.63px;top:589px;line-height:16px;font-size:14.15px;color:#1c1c1c;">(1,000)</div>
<div class="t" style="left:992.63px;top:589px;line-height:16px;font-size:14.15px;color:#1c1c1c;">(1,000)</div>
<div class="t" style="left:1111.63px;top:589px;line-height:16px;font-size:14.15px;color:#1c1c1c;">(1,667)</div>
<div class="t" style="left:1230.63px;top:589px;line-height:16px;font-size:14.15px;color:#1c1c1c;">(1,656)</div>
<div class="t" style="left:1349.63px;top:589px;line-height:16px;font-size:14.15px;color:#1c1c1c;">(1,644)</div>
<div class="t" style="left:1468.63px;top:589px;line-height:16px;font-size:14.15px;color:#1c1c1c;">(1,633)</div>
<div class="t" style="left:1587.63px;top:589px;line-height:16px;font-size:14.15px;color:#1c1c1c;">(1,622)</div>
<div class="t" style="left:1706.63px;top:589px;line-height:16px;font-size:14.15px;color:#1c1c1c;">(1,611)</div>
<div class="t" style="left:1825.63px;top:589px;line-height:16px;font-size:14.15px;color:#1c1c1c;">(1,600)</div>
<div class="t" style="left:1944.63px;top:589px;line-height:16px;font-size:14.15px;color:#1c1c1c;">(1,589)</div>
<div class="t" style="left:2063.63px;top:589px;line-height:16px;font-size:14.15px;color:#1c1c1c;">(1,578)</div>
<div class="t" style="left:2182.63px;top:589px;line-height:16px;font-size:14.15px;color:#1c1c1c;">(1,567)</div>
<div class="t" style="left:2301.63px;top:589px;line-height:16px;font-size:14.15px;color:#1c1c1c;">(1,556)</div>
<div class="t" style="left:2420.63px;top:589px;line-height:16px;font-size:14.15px;color:#1c1c1c;">(1,534)</div>
<div class="t" style="left:2539.63px;top:589px;line-height:16px;font-size:14.15px;color:#1c1c1c;">(1,512)</div>
<div class="t" style="left:2658.63px;top:589px;line-height:16px;font-size:14.15px;color:#1c1c1c;">(1,491)</div>
<div class="t" style="left:2777.63px;top:589px;line-height:16px;font-size:14.15px;color:#1c1c1c;">(1,469)</div>
<div class="t" style="left:139.4px;top:608px;line-height:19px;font-size:16px;color:#1c1c1c;letter-spacing:-0.11px;">Corporate Tax Expense</div>
<div class="t" style="left:910.41px;top:609px;line-height:16px;font-size:14.15px;color:#1c1c1c;">-</div>
<div class="t" style="left:1029.41px;top:609px;line-height:16px;font-size:14.15px;color:#1c1c1c;">-</div>
<div class="t" style="left:1148.41px;top:609px;line-height:16px;font-size:14.15px;color:#1c1c1c;">-</div>
<div class="t" style="left:1267.41px;top:609px;line-height:16px;font-size:14.15px;color:#1c1c1c;">-</div>
<div class="t" style="left:1386.41px;top:609px;line-height:16px;font-size:14.15px;color:#1c1c1c;">-</div>
<div class="t" style="left:1505.41px;top:609px;line-height:16px;font-size:14.15px;color:#1c1c1c;">-</div>
<div class="t" style="left:1624.41px;top:609px;line-height:16px;font-size:14.15px;color:#1c1c1c;">-</div>
<div class="t" style="left:1743.41px;top:609px;line-height:16px;font-size:14.15px;color:#1c1c1c;">-</div>
<div class="t" style="left:1862.41px;top:609px;line-height:16px;font-size:14.15px;color:#1c1c1c;">-</div>
<div class="t" style="left:1981.41px;top:609px;line-height:16px;font-size:14.15px;color:#1c1c1c;">-</div>
<div class="t" style="left:2100.41px;top:609px;line-height:16px;font-size:14.15px;color:#1c1c1c;">-</div>
<div class="t" style="left:2219.41px;top:609px;line-height:16px;font-size:14.15px;color:#1c1c1c;">-</div>
<div class="t" style="left:2338.41px;top:609px;line-height:16px;font-size:14.15px;color:#1c1c1c;">-</div>
<div class="t" style="left:2457.41px;top:609px;line-height:16px;font-size:14.15px;color:#1c1c1c;">-</div>
<div class="t" style="left:2551.77px;top:609px;line-height:16px;font-size:14.15px;color:#1c1c1c;">(536)</div>
<div class="t" style="left:2658.63px;top:609px;line-height:16px;font-size:14.15px;color:#1c1c1c;">(1,411)</div>
<div class="t" style="left:2777.63px;top:609px;line-height:16px;font-size:14.15px;color:#1c1c1c;">(2,286)</div>
<div class="t" style="left:139.4px;top:692px;line-height:19px;font-size:16px;color:#1c1c1c;letter-spacing:-0.33px;">Capital Expenditure</div>
<div class="t" style="left:865.54px;top:693px;line-height:16px;font-size:14.15px;color:#1c1c1c;">(15,917)</div>
<div class="t" style="left:984.54px;top:693px;line-height:16px;font-size:14.15px;color:#1c1c1c;">(17,917)</div>
<div class="t" style="left:1103.54px;top:693px;line-height:16px;font-size:14.15px;color:#1c1c1c;">(25,000)</div>
<div class="t" style="left:1222.54px;top:693px;line-height:16px;font-size:14.15px;color:#1c1c1c;">(17,333)</div>
<div class="t" style="left:1341.54px;top:693px;line-height:16px;font-size:14.15px;color:#1c1c1c;">(12,333)</div>
<div class="t" style="left:1468.63px;top:693px;line-height:16px;font-size:14.15px;color:#1c1c1c;">(4,000)</div>
<div class="t" style="left:1624.41px;top:693px;line-height:16px;font-size:14.15px;color:#1c1c1c;">-</div>
<div class="t" style="left:1743.41px;top:693px;line-height:16px;font-size:14.15px;color:#1c1c1c;">-</div>
<div class="t" style="left:1862.41px;top:693px;line-height:16px;font-size:14.15px;color:#1c1c1c;">-</div>
<div class="t" style="left:1981.41px;top:693px;line-height:16px;font-size:14.15px;color:#1c1c1c;">-</div>
<div class="t" style="left:2100.41px;top:693px;line-height:16px;font-size:14.15px;color:#1c1c1c;">-</div>
<div class="t" style="left:2219.41px;top:693px;line-height:16px;font-size:14.15px;color:#1c1c1c;">-</div>
<div class="t" style="left:2338.41px;top:693px;line-height:16px;font-size:14.15px;color:#1c1c1c;">-</div>
<div class="t" style="left:2457.41px;top:693px;line-height:16px;font-size:14.15px;color:#1c1c1c;">-</div>
<div class="t" style="left:2576.41px;top:693px;line-height:16px;font-size:14.15px;color:#1c1c1c;">-</div>
<div class="t" style="left:2695.41px;top:693px;line-height:16px;font-size:14.15px;color:#1c1c1c;">-</div>
<div class="t" style="left:2814.41px;top:693px;line-height:16px;font-size:14.15px;color:#1c1c1c;">-</div>
<div class="t" style="left:139.4px;top:780px;line-height:19px;font-size:16px;color:#1c1c1c;letter-spacing:-0.28px;">Debts Drawdowns</div>
<div class="t" style="left:862.38px;top:781px;line-height:16px;font-size:14.15px;color:#1c1c1c;">200,000</div>
<div class="t" style="left:1029.41px;top:781px;line-height:16px;font-size:14.15px;color:#1c1c1c;">-</div>
<div class="t" style="left:1100.38px;top:781px;line-height:16px;font-size:14.15px;color:#1c1c1c;">100,000</div>
<div class="t" style="left:1267.41px;top:781px;line-height:16px;font-size:14.15px;color:#1c1c1c;">-</div>
<div class="t" style="left:1386.41px;top:781px;line-height:16px;font-size:14.15px;color:#1c1c1c;">-</div>
<div class="t" style="left:1505.41px;top:781px;line-height:16px;font-size:14.15px;color:#1c1c1c;">-</div>
<div class="t" style="left:1624.41px;top:781px;line-height:16px;font-size:14.15px;color:#1c1c1c;">-</div>
<div class="t" style="left:1743.41px;top:781px;line-height:16px;font-size:14.15px;color:#1c1c1c;">-</div>
<div class="t" style="left:1862.41px;top:781px;line-height:16px;font-size:14.15px;color:#1c1c1c;">-</div>
<div class="t" style="left:1981.41px;top:781px;line-height:16px;font-size:14.15px;color:#1c1c1c;">-</div>
<div class="t" style="left:2100.41px;top:781px;line-height:16px;font-size:14.15px;color:#1c1c1c;">-</div>
<div class="t" style="left:2219.41px;top:781px;line-height:16px;font-size:14.15px;color:#1c1c1c;">-</div>
<div class="t" style="left:2338.41px;top:781px;line-height:16px;font-size:14.15px;color:#1c1c1c;">-</div>
<div class="t" style="left:2457.41px;top:781px;line-height:16px;font-size:14.15px;color:#1c1c1c;">-</div>
<div class="t" style="left:2576.41px;top:781px;line-height:16px;font-size:14.15px;color:#1c1c1c;">-</div>
<div class="t" style="left:2695.41px;top:781px;line-height:16px;font-size:14.15px;color:#1c1c1c;">-</div>
<div class="t" style="left:2814.41px;top:781px;line-height:16px;font-size:14.15px;color:#1c1c1c;">-</div>
<div class="t" style="left:139.4px;top:800px;line-height:19px;font-size:16px;color:#1c1c1c;letter-spacing:-0.43px;">Debts Repayments</div>
<div class="t" style="left:910.41px;top:801px;line-height:16px;font-size:14.15px;color:#1c1c1c;">-</div>
<div class="t" style="left:1029.41px;top:801px;line-height:16px;font-size:14.15px;color:#1c1c1c;">-</div>
<div class="t" style="left:1111.63px;top:801px;line-height:16px;font-size:14.15px;color:#1c1c1c;">(1,667)</div>
<div class="t" style="left:1230.63px;top:801px;line-height:16px;font-size:14.15px;color:#1c1c1c;">(1,667)</div>
<div class="t" style="left:1349.63px;top:801px;line-height:16px;font-size:14.15px;color:#1c1c1c;">(1,667)</div>
<div class="t" style="left:1468.63px;top:801px;line-height:16px;font-size:14.15px;color:#1c1c1c;">(1,667)</div>
<div class="t" style="left:1587.63px;top:801px;line-height:16px;font-size:14.15px;color:#1c1c1c;">(1,667)</div>
<div class="t" style="left:1706.63px;top:801px;line-height:16px;font-size:14.15px;color:#1c1c1c;">(1,667)</div>
<div class="t" style="left:1825.63px;top:801px;line-height:16px;font-size:14.15px;color:#1c1c1c;">(1,667)</div>
<div class="t" style="left:1944.63px;top:801px;line-height:16px;font-size:14.15px;color:#1c1c1c;">(1,667)</div>
<div class="t" style="left:2063.63px;top:801px;line-height:16px;font-size:14.15px;color:#1c1c1c;">(1,667)</div>
<div class="t" style="left:2182.63px;top:801px;line-height:16px;font-size:14.15px;color:#1c1c1c;">(1,667)</div>
<div class="t" style="left:2301.63px;top:801px;line-height:16px;font-size:14.15px;color:#1c1c1c;">(3,770)</div>
<div class="t" style="left:2420.63px;top:801px;line-height:16px;font-size:14.15px;color:#1c1c1c;">(3,780)</div>
<div class="t" style="left:2539.63px;top:801px;line-height:16px;font-size:14.15px;color:#1c1c1c;">(3,791)</div>
<div class="t" style="left:2658.63px;top:801px;line-height:16px;font-size:14.15px;color:#1c1c1c;">(3,801)</div>
<div class="t" style="left:2777.63px;top:801px;line-height:16px;font-size:14.15px;color:#1c1c1c;">(3,812)</div>
<div class="t" style="left:139.4px;top:820px;line-height:19px;font-size:16px;color:#1c1c1c;letter-spacing:-0.26px;">Equity Raisings</div>
<div class="t" style="left:862.38px;top:821px;line-height:16px;font-size:14.15px;color:#1c1c1c;">700,000</div>
<div class="t" style="left:1029.41px;top:821px;line-height:16px;font-size:14.15px;color:#1c1c1c;">-</div>
<div class="t" style="left:1148.41px;top:821px;line-height:16px;font-size:14.15px;color:#1c1c1c;">-</div>
<div class="t" style="left:1267.41px;top:821px;line-height:16px;font-size:14.15px;color:#1c1c1c;">-</div>
<div class="t" style="left:1386.41px;top:821px;line-height:16px;font-size:14.15px;color:#1c1c1c;">-</div>
<div class="t" style="left:1505.41px;top:821px;line-height:16px;font-size:14.15px;color:#1c1c1c;">-</div>
<div class="t" style="left:1624.41px;top:821px;line-height:16px;font-size:14.15px;color:#1c1c1c;">-</div>
<div class="t" style="left:1743.41px;top:821px;line-height:16px;font-size:14.15px;color:#1c1c1c;">-</div>
<div class="t" style="left:1862.41px;top:821px;line-height:16px;font-size:14.15px;color:#1c1c1c;">-</div>
<div class="t" style="left:1981.41px;top:821px;line-height:16px;font-size:14.15px;color:#1c1c1c;">-</div>
<div class="t" style="left:2100.41px;top:821px;line-height:16px;font-size:14.15px;color:#1c1c1c;">-</div>
<div class="t" style="left:2219.41px;top:821px;line-height:16px;font-size:14.15px;color:#1c1c1c;">-</div>
<div class="t" style="left:2338.41px;top:821px;line-height:16px;font-size:14.15px;color:#1c1c1c;">-</div>
<div class="t" style="left:2457.41px;top:821px;line-height:16px;font-size:14.15px;color:#1c1c1c;">-</div>
<div class="t" style="left:2576.41px;top:821px;line-height:16px;font-size:14.15px;color:#1c1c1c;">-</div>
<div class="t" style="left:2695.41px;top:821px;line-height:16px;font-size:14.15px;color:#1c1c1c;">-</div>
<div class="t" style="left:2814.41px;top:821px;line-height:16px;font-size:14.15px;color:#1c1c1c;">-</div>
<div class="t" style="left:139.4px;top:840px;line-height:19px;font-size:16px;color:#1c1c1c;letter-spacing:-0.42px;">Equity Buybacks</div>
<div class="t" style="left:910.41px;top:841px;line-height:16px;font-size:14.15px;color:#1c1c1c;">-</div>
<div class="t" style="left:1029.41px;top:841px;line-height:16px;font-size:14.15px;color:#1c1c1c;">-</div>
<div class="t" style="left:1148.41px;top:841px;line-height:16px;font-size:14.15px;color:#1c1c1c;">-</div>
<div class="t" style="left:1267.41px;top:841px;line-height:16px;font-size:14.15px;color:#1c1c1c;">-</div>
<div class="t" style="left:1386.41px;top:841px;line-height:16px;font-size:14.15px;color:#1c1c1c;">-</div>
<div class="t" style="left:1505.41px;top:841px;line-height:16px;font-size:14.15px;color:#1c1c1c;">-</div>
<div class="t" style="left:1624.41px;top:841px;line-height:16px;font-size:14.15px;color:#1c1c1c;">-</div>
<div class="t" style="left:1743.41px;top:841px;line-height:16px;font-size:14.15px;color:#1c1c1c;">-</div>
<div class="t" style="left:1862.41px;top:841px;line-height:16px;font-size:14.15px;color:#1c1c1c;">-</div>
<div class="t" style="left:1981.41px;top:841px;line-height:16px;font-size:14.15px;color:#1c1c1c;">-</div>
<div class="t" style="left:2100.41px;top:841px;line-height:16px;font-size:14.15px;color:#1c1c1c;">-</div>
<div class="t" style="left:2219.41px;top:841px;line-height:16px;font-size:14.15px;color:#1c1c1c;">-</div>
<div class="t" style="left:2338.41px;top:841px;line-height:16px;font-size:14.15px;color:#1c1c1c;">-</div>
<div class="t" style="left:2457.41px;top:841px;line-height:16px;font-size:14.15px;color:#1c1c1c;">-</div>
<div class="t" style="left:2576.41px;top:841px;line-height:16px;font-size:14.15px;color:#1c1c1c;">-</div>
<div class="t" style="left:2695.41px;top:841px;line-height:16px;font-size:14.15px;color:#1c1c1c;">-</div>
<div class="t" style="left:2814.41px;top:841px;line-height:16px;font-size:14.15px;color:#1c1c1c;">-</div>
<div class="t" style="left:139.4px;top:860px;line-height:19px;font-size:16px;color:#1c1c1c;letter-spacing:-0.2px;">Dividends Paid</div>
<div class="t" style="left:910.41px;top:861px;line-height:16px;font-size:14.15px;color:#1c1c1c;">-</div>
<div class="t" style="left:1029.41px;top:861px;line-height:16px;font-size:14.15px;color:#1c1c1c;">-</div>
<div class="t" style="left:1148.41px;top:861px;line-height:16px;font-size:14.15px;color:#1c1c1c;">-</div>
<div class="t" style="left:1267.41px;top:861px;line-height:16px;font-size:14.15px;color:#1c1c1c;">-</div>
<div class="t" style="left:1386.41px;top:861px;line-height:16px;font-size:14.15px;color:#1c1c1c;">-</div>
<div class="t" style="left:1505.41px;top:861px;line-height:16px;font-size:14.15px;color:#1c1c1c;">-</div>
<div class="t" style="left:1624.41px;top:861px;line-height:16px;font-size:14.15px;color:#1c1c1c;">-</div>
<div class="t" style="left:1743.41px;top:861px;line-height:16px;font-size:14.15px;color:#1c1c1c;">-</div>
<div class="t" style="left:1862.41px;top:861px;line-height:16px;font-size:14.15px;color:#1c1c1c;">-</div>
<div class="t" style="left:1981.41px;top:861px;line-height:16px;font-size:14.15px;color:#1c1c1c;">-</div>
<div class="t" style="left:2100.41px;top:861px;line-height:16px;font-size:14.15px;color:#1c1c1c;">-</div>
<div class="t" style="left:2219.41px;top:861px;line-height:16px;font-size:14.15px;color:#1c1c1c;">-</div>
<div class="t" style="left:2338.41px;top:861px;line-height:16px;font-size:14.15px;color:#1c1c1c;">-</div>
<div class="t" style="left:2457.41px;top:861px;line-height:16px;font-size:14.15px;color:#1c1c1c;">-</div>
<div class="t" style="left:2576.41px;top:861px;line-height:16px;font-size:14.15px;color:#1c1c1c;">-</div>
<div class="t" style="left:2695.41px;top:861px;line-height:16px;font-size:14.15px;color:#1c1c1c;">-</div>
<div class="t" style="left:2814.41px;top:861px;line-height:16px;font-size:14.15px;color:#1c1c1c;">-</div>
<div class="t" style="left:139.4px;top:1032px;line-height:19px;font-size:16px;color:#1c1c1c;letter-spacing:-0.24px;">Net Income Less Depreciation</div>
<div class="t" style="left:856.15px;top:1032px;line-height:19px;font-size:16.2px;color:#1c1c1c;">(22,435)</div>
<div class="t" style="left:975.15px;top:1032px;line-height:19px;font-size:16.2px;color:#1c1c1c;">(21,287)</div>
<div class="t" style="left:1094.15px;top:1032px;line-height:19px;font-size:16.2px;color:#1c1c1c;">(20,806)</div>
<div class="t" style="left:1213.15px;top:1032px;line-height:19px;font-size:16.2px;color:#1c1c1c;">(19,646)</div>
<div class="t" style="left:1332.15px;top:1032px;line-height:19px;font-size:16.2px;color:#1c1c1c;">(18,487)</div>
<div class="t" style="left:1451.15px;top:1032px;line-height:19px;font-size:16.2px;color:#1c1c1c;">(17,328)</div>
<div class="t" style="left:1570.15px;top:1032px;line-height:19px;font-size:16.2px;color:#1c1c1c;">(19,056)</div>
<div class="t" style="left:1689.15px;top:1032px;line-height:19px;font-size:16.2px;color:#1c1c1c;">(17,897)</div>
<div class="t" style="left:1808.15px;top:1032px;line-height:19px;font-size:16.2px;color:#1c1c1c;">(17,886)</div>
<div class="t" style="left:1927.15px;top:1032px;line-height:19px;font-size:16.2px;color:#1c1c1c;">(17,875)</div>
<div class="t" style="left:2046.15px;top:1032px;line-height:19px;font-size:16.2px;color:#1c1c1c;">(17,864)</div>
<div class="t" style="left:2165.15px;top:1032px;line-height:19px;font-size:16.2px;color:#1c1c1c;">(17,853)</div>
<div class="t" style="left:2293.41px;top:1032px;line-height:19px;font-size:16.2px;color:#1c1c1c;">(4,266)</div>
<div class="t" style="left:2426.31px;top:1032px;line-height:19px;font-size:16.2px;color:#1c1c1c;">(634)</div>
<div class="t" style="left:2536.79px;top:1032px;line-height:19px;font-size:16.2px;color:#1c1c1c;">2,462</div>
<div class="t" style="left:2655.79px;top:1032px;line-height:19px;font-size:16.2px;color:#1c1c1c;">5,220</div>
<div class="t" style="left:2774.79px;top:1032px;line-height:19px;font-size:16.2px;color:#1c1c1c;">7,977</div>
<div class="t" style="left:139.4px;top:1050px;line-height:19px;font-size:16px;color:#1c1c1c;letter-spacing:-0.19px;">Changes in Working Capital</div>
<div class="t" style="left:870.79px;top:1050px;line-height:19px;font-size:16.2px;color:#1c1c1c;">9,542</div>
<div class="t" style="left:1003.68px;top:1050px;line-height:19px;font-size:16.2px;color:#1c1c1c;">324</div>
<div class="t" style="left:1103.41px;top:1050px;line-height:19px;font-size:16.2px;color:#1c1c1c;">(1,586)</div>
<div class="t" style="left:1236.31px;top:1050px;line-height:19px;font-size:16.2px;color:#1c1c1c;">(376)</div>
<div class="t" style="left:1355.31px;top:1050px;line-height:19px;font-size:16.2px;color:#1c1c1c;">(886)</div>
<div class="t" style="left:1474.31px;top:1050px;line-height:19px;font-size:16.2px;color:#1c1c1c;">(418)</div>
<div class="t" style="left:1598.68px;top:1050px;line-height:19px;font-size:16.2px;color:#1c1c1c;">553</div>
<div class="t" style="left:1712.31px;top:1050px;line-height:19px;font-size:16.2px;color:#1c1c1c;">(631)</div>
<div class="t" style="left:1836.68px;top:1050px;line-height:19px;font-size:16.2px;color:#1c1c1c;">217</div>
<div class="t" style="left:1950.31px;top:1050px;line-height:19px;font-size:16.2px;color:#1c1c1c;">(217)</div>
<div class="t" style="left:2074.68px;top:1050px;line-height:19px;font-size:16.2px;color:#1c1c1c;">217</div>
<div class="t" style="left:2188.31px;top:1050px;line-height:19px;font-size:16.2px;color:#1c1c1c;">(217)</div>
<div class="t" style="left:2293.41px;top:1050px;line-height:19px;font-size:16.2px;color:#1c1c1c;">(8,570)</div>
<div class="t" style="left:2412.41px;top:1050px;line-height:19px;font-size:16.2px;color:#1c1c1c;">(2,398)</div>
<div class="t" style="left:2531.41px;top:1050px;line-height:19px;font-size:16.2px;color:#1c1c1c;">(1,538)</div>
<div class="t" style="left:2650.41px;top:1050px;line-height:19px;font-size:16.2px;color:#1c1c1c;">(2,233)</div>
<div class="t" style="left:2769.41px;top:1050px;line-height:19px;font-size:16.2px;color:#1c1c1c;">(1,703)</div>
<div class="t" style="left:139.4px;top:1134px;line-height:19px;font-size:16px;color:#1c1c1c;letter-spacing:-0.33px;">Capital Expenditure</div>
<div class="t" style="left:856.15px;top:1134px;line-height:19px;font-size:16.2px;color:#1c1c1c;">(15,917)</div>
<div class="t" style="left:975.15px;top:1134px;line-height:19px;font-size:16.2px;color:#1c1c1c;">(17,917)</div>
<div class="t" style="left:1094.15px;top:1134px;line-height:19px;font-size:16.2px;color:#1c1c1c;">(25,000)</div>
<div class="t" style="left:1213.15px;top:1134px;line-height:19px;font-size:16.2px;color:#1c1c1c;">(17,333)</div>
<div class="t" style="left:1332.15px;top:1134px;line-height:19px;font-size:16.2px;color:#1c1c1c;">(12,333)</div>
<div class="t" style="left:1460.41px;top:1134px;line-height:19px;font-size:16.2px;color:#1c1c1c;">(4,000)</div>
<div class="t" style="left:1621.24px;top:1134px;line-height:19px;font-size:16.2px;color:#1c1c1c;">-</div>
<div class="t" style="left:1740.24px;top:1134px;line-height:19px;font-size:16.2px;color:#1c1c1c;">-</div>
<div class="t" style="left:1859.24px;top:1134px;line-height:19px;font-size:16.2px;color:#1c1c1c;">-</div>
<div class="t" style="left:1978.24px;top:1134px;line-height:19px;font-size:16.2px;color:#1c1c1c;">-</div>
<div class="t" style="left:2097.24px;top:1134px;line-height:19px;font-size:16.2px;color:#1c1c1c;">-</div>
<div class="t" style="left:2216.24px;top:1134px;line-height:19px;font-size:16.2px;color:#1c1c1c;">-</div>
<div class="t" style="left:2335.24px;top:1134px;line-height:19px;font-size:16.2px;color:#1c1c1c;">-</div>
<div class="t" style="left:2454.24px;top:1134px;line-height:19px;font-size:16.2px;color:#1c1c1c;">-</div>
<div class="t" style="left:2573.24px;top:1134px;line-height:19px;font-size:16.2px;color:#1c1c1c;">-</div>
<div class="t" style="left:2692.24px;top:1134px;line-height:19px;font-size:16.2px;color:#1c1c1c;">-</div>
<div class="t" style="left:2811.24px;top:1134px;line-height:19px;font-size:16.2px;color:#1c1c1c;">-</div>
<div class="t" style="left:139.4px;top:1218px;line-height:19px;font-size:16px;color:#1c1c1c;letter-spacing:-0.25px;">Equity Investment</div>
<div class="t" style="left:852.25px;top:1218px;line-height:19px;font-size:16.2px;color:#1c1c1c;">700,000</div>
<div class="t" style="left:1026.24px;top:1218px;line-height:19px;font-size:16.2px;color:#1c1c1c;">-</div>
<div class="t" style="left:1145.24px;top:1218px;line-height:19px;font-size:16.2px;color:#1c1c1c;">-</div>
<div class="t" style="left:1264.24px;top:1218px;line-height:19px;font-size:16.2px;color:#1c1c1c;">-</div>
<div class="t" style="left:1383.24px;top:1218px;line-height:19px;font-size:16.2px;color:#1c1c1c;">-</div>
<div class="t" style="left:1502.24px;top:1218px;line-height:19px;font-size:16.2px;color:#1c1c1c;">-</div>
<div class="t" style="left:1621.24px;top:1218px;line-height:19px;font-size:16.2px;color:#1c1c1c;">-</div>
<div class="t" style="left:1740.24px;top:1218px;line-height:19px;font-size:16.2px;color:#1c1c1c;">-</div>
<div class="t" style="left:1859.24px;top:1218px;line-height:19px;font-size:16.2px;color:#1c1c1c;">-</div>
<div class="t" style="left:1978.24px;top:1218px;line-height:19px;font-size:16.2px;color:#1c1c1c;">-</div>
<div class="t" style="left:2097.24px;top:1218px;line-height:19px;font-size:16.2px;color:#1c1c1c;">-</div>
<div class="t" style="left:2216.24px;top:1218px;line-height:19px;font-size:16.2px;color:#1c1c1c;">-</div>
<div class="t" style="left:2335.24px;top:1218px;line-height:19px;font-size:16.2px;color:#1c1c1c;">-</div>
<div class="t" style="left:2454.24px;top:1218px;line-height:19px;font-size:16.2px;color:#1c1c1c;">-</div>
<div class="t" style="left:2573.24px;top:1218px;line-height:19px;font-size:16.2px;color:#1c1c1c;">-</div>
<div class="t" style="left:2692.24px;top:1218px;line-height:19px;font-size:16.2px;color:#1c1c1c;">-</div>
<div class="t" style="left:2811.24px;top:1218px;line-height:19px;font-size:16.2px;color:#1c1c1c;">-</div>
<div class="t" style="left:139.4px;top:1236px;line-height:19px;font-size:16px;color:#1c1c1c;letter-spacing:-0.42px;">Loans</div>
<div class="t" style="left:852.25px;top:1236px;line-height:19px;font-size:16.2px;color:#1c1c1c;">200,000</div>
<div class="t" style="left:1026.24px;top:1236px;line-height:19px;font-size:16.2px;color:#1c1c1c;">-</div>
<div class="t" style="left:1099.52px;top:1236px;line-height:19px;font-size:16.2px;color:#1c1c1c;">98,333</div>
<div class="t" style="left:1222.41px;top:1236px;line-height:19px;font-size:16.2px;color:#1c1c1c;">(1,667)</div>
<div class="t" style="left:1341.41px;top:1236px;line-height:19px;font-size:16.2px;color:#1c1c1c;">(1,667)</div>
<div class="t" style="left:1460.41px;top:1236px;line-height:19px;font-size:16.2px;color:#1c1c1c;">(1,667)</div>
<div class="t" style="left:1579.41px;top:1236px;line-height:19px;font-size:16.2px;color:#1c1c1c;">(1,667)</div>
<div class="t" style="left:1698.41px;top:1236px;line-height:19px;font-size:16.2px;color:#1c1c1c;">(1,667)</div>
<div class="t" style="left:1817.41px;top:1236px;line-height:19px;font-size:16.2px;color:#1c1c1c;">(1,667)</div>
<div class="t" style="left:1936.41px;top:1236px;line-height:19px;font-size:16.2px;color:#1c1c1c;">(1,667)</div>
<div class="t" style="left:2055.41px;top:1236px;line-height:19px;font-size:16.2px;color:#1c1c1c;">(1,667)</div>
<div class="t" style="left:2174.41px;top:1236px;line-height:19px;font-size:16.2px;color:#1c1c1c;">(1,667)</div>
<div class="t" style="left:2293.41px;top:1236px;line-height:19px;font-size:16.2px;color:#1c1c1c;">(3,770)</div>
<div class="t" style="left:2412.41px;top:1236px;line-height:19px;font-size:16.2px;color:#1c1c1c;">(3,780)</div>
<div class="t" style="left:2531.41px;top:1236px;line-height:19px;font-size:16.2px;color:#1c1c1c;">(3,791)</div>
<div class="t" style="left:2650.41px;top:1236px;line-height:19px;font-size:16.2px;color:#1c1c1c;">(3,801)</div>
<div class="t" style="left:2769.41px;top:1236px;line-height:19px;font-size:16.2px;color:#1c1c1c;">(3,812)</div>
<div class="t" style="left:139.4px;top:1254px;line-height:19px;font-size:16px;color:#1c1c1c;letter-spacing:-0.2px;">Dividends Paid</div>
<div class="t" style="left:907.24px;top:1254px;line-height:19px;font-size:16.2px;color:#1c1c1c;">-</div>
<div class="t" style="left:1026.24px;top:1254px;line-height:19px;font-size:16.2px;color:#1c1c1c;">-</div>
<div class="t" style="left:1145.24px;top:1254px;line-height:19px;font-size:16.2px;color:#1c1c1c;">-</div>
<div class="t" style="left:1264.24px;top:1254px;line-height:19px;font-size:16.2px;color:#1c1c1c;">-</div>
<div class="t" style="left:1383.24px;top:1254px;line-height:19px;font-size:16.2px;color:#1c1c1c;">-</div>
<div class="t" style="left:1502.24px;top:1254px;line-height:19px;font-size:16.2px;color:#1c1c1c;">-</div>
<div class="t" style="left:1621.24px;top:1254px;line-height:19px;font-size:16.2px;color:#1c1c1c;">-</div>
<div class="t" style="left:1740.24px;top:1254px;line-height:19px;font-size:16.2px;color:#1c1c1c;">-</div>
<div class="t" style="left:1859.24px;top:1254px;line-height:19px;font-size:16.2px;color:#1c1c1c;">-</div>
<div class="t" style="left:1978.24px;top:1254px;line-height:19px;font-size:16.2px;color:#1c1c1c;">-</div>
<div class="t" style="left:2097.24px;top:1254px;line-height:19px;font-size:16.2px;color:#1c1c1c;">-</div>
<div class="t" style="left:2216.24px;top:1254px;line-height:19px;font-size:16.2px;color:#1c1c1c;">-</div>
<div class="t" style="left:2335.24px;top:1254px;line-height:19px;font-size:16.2px;color:#1c1c1c;">-</div>
<div class="t" style="left:2454.24px;top:1254px;line-height:19px;font-size:16.2px;color:#1c1c1c;">-</div>
<div class="t" style="left:2573.24px;top:1254px;line-height:19px;font-size:16.2px;color:#1c1c1c;">-</div>
<div class="t" style="left:2692.24px;top:1254px;line-height:19px;font-size:16.2px;color:#1c1c1c;">-</div>
<div class="t" style="left:2811.24px;top:1254px;line-height:19px;font-size:16.2px;color:#1c1c1c;">-</div>
<div class="t" style="left:139.4px;top:1340px;line-height:19px;font-size:16px;color:#1c1c1c;letter-spacing:-0.26px;">Cash and Cash Equivalents Beginning</div>
<div class="t" style="left:907.24px;top:1340px;line-height:19px;font-size:16.2px;color:#1c1c1c;">-</div>
<div class="t" style="left:971.25px;top:1340px;line-height:19px;font-size:16.2px;color:#1c1c1c;">871,191</div>
<div class="t" style="left:1090.25px;top:1340px;line-height:19px;font-size:16.2px;color:#1c1c1c;">832,311</div>
<div class="t" style="left:1209.25px;top:1340px;line-height:19px;font-size:16.2px;color:#1c1c1c;">883,253</div>
<div class="t" style="left:1328.25px;top:1340px;line-height:19px;font-size:16.2px;color:#1c1c1c;">844,230</div>
<div class="t" style="left:1447.25px;top:1340px;line-height:19px;font-size:16.2px;color:#1c1c1c;">810,857</div>
<div class="t" style="left:1566.25px;top:1340px;line-height:19px;font-size:16.2px;color:#1c1c1c;">787,445</div>
<div class="t" style="left:1685.25px;top:1340px;line-height:19px;font-size:16.2px;color:#1c1c1c;">767,275</div>
<div class="t" style="left:1804.25px;top:1340px;line-height:19px;font-size:16.2px;color:#1c1c1c;">747,080</div>
<div class="t" style="left:1923.25px;top:1340px;line-height:19px;font-size:16.2px;color:#1c1c1c;">727,745</div>
<div class="t" style="left:2042.25px;top:1340px;line-height:19px;font-size:16.2px;color:#1c1c1c;">707,987</div>
<div class="t" style="left:2161.25px;top:1340px;line-height:19px;font-size:16.2px;color:#1c1c1c;">688,674</div>
<div class="t" style="left:2280.25px;top:1340px;line-height:19px;font-size:16.2px;color:#1c1c1c;">668,937</div>
<div class="t" style="left:2399.25px;top:1340px;line-height:19px;font-size:16.2px;color:#1c1c1c;">652,332</div>
<div class="t" style="left:2518.25px;top:1340px;line-height:19px;font-size:16.2px;color:#1c1c1c;">645,520</div>
<div class="t" style="left:2637.25px;top:1340px;line-height:19px;font-size:16.2px;color:#1c1c1c;">642,653</div>
<div class="t" style="left:2756.25px;top:1340px;line-height:19px;font-size:16.2px;color:#1c1c1c;">641,839</div>
<div class="t" style="left:139.4px;top:1363px;line-height:19px;font-size:16px;color:#1c1c1c;letter-spacing:-0.2px;">Net (Increase) Decrease In Cash</div>
<div class="t" style="left:852.25px;top:1363px;line-height:19px;font-size:16.2px;color:#1c1c1c;">871,191</div>
<div class="t" style="left:975.15px;top:1363px;line-height:19px;font-size:16.2px;color:#1c1c1c;">(38,880)</div>
<div class="t" style="left:1099.52px;top:1363px;line-height:19px;font-size:16.2px;color:#1c1c1c;">50,942</div>
<div class="t" style="left:1213.15px;top:1363px;line-height:19px;font-size:16.2px;color:#1c1c1c;">(39,022)</div>
<div class="t" style="left:1332.15px;top:1363px;line-height:19px;font-size:16.2px;color:#1c1c1c;">(33,373)</div>
<div class="t" style="left:1451.15px;top:1363px;line-height:19px;font-size:16.2px;color:#1c1c1c;">(23,413)</div>
<div class="t" style="left:1570.15px;top:1363px;line-height:19px;font-size:16.2px;color:#1c1c1c;">(20,170)</div>
<div class="t" style="left:1689.15px;top:1363px;line-height:19px;font-size:16.2px;color:#1c1c1c;">(20,195)</div>
<div class="t" style="left:1808.15px;top:1363px;line-height:19px;font-size:16.2px;color:#1c1c1c;">(19,335)</div>
<div class="t" style="left:1927.15px;top:1363px;line-height:19px;font-size:16.2px;color:#1c1c1c;">(19,759)</div>
<div class="t" style="left:2046.15px;top:1363px;line-height:19px;font-size:16.2px;color:#1c1c1c;">(19,313)</div>
<div class="t" style="left:2165.15px;top:1363px;line-height:19px;font-size:16.2px;color:#1c1c1c;">(19,737)</div>
<div class="t" style="left:2284.15px;top:1363px;line-height:19px;font-size:16.2px;color:#1c1c1c;">(16,605)</div>
<div class="t" style="left:2412.41px;top:1363px;line-height:19px;font-size:16.2px;color:#1c1c1c;">(6,812)</div>
<div class="t" style="left:2531.41px;top:1363px;line-height:19px;font-size:16.2px;color:#1c1c1c;">(2,866)</div>
<div class="t" style="left:2664.31px;top:1363px;line-height:19px;font-size:16.2px;color:#1c1c1c;">(815)</div>
<div class="t" style="left:2774.79px;top:1363px;line-height:19px;font-size:16.2px;color:#1c1c1c;">2,462</div>
<div class="t" style="left:139.4px;top:1481px;line-height:19px;font-size:16px;color:#1c1c1c;letter-spacing:-0.11px;">Net Cash Flow from Investing Activities</div>
<div class="t" style="left:865.54px;top:1482px;line-height:16px;font-size:14.15px;color:#1c1c1c;">(15,917)</div>
<div class="t" style="left:984.54px;top:1482px;line-height:16px;font-size:14.15px;color:#1c1c1c;">(17,917)</div>
<div class="t" style="left:1103.54px;top:1482px;line-height:16px;font-size:14.15px;color:#1c1c1c;">(25,000)</div>
<div class="t" style="left:1222.54px;top:1482px;line-height:16px;font-size:14.15px;color:#1c1c1c;">(17,333)</div>
<div class="t" style="left:1341.54px;top:1482px;line-height:16px;font-size:14.15px;color:#1c1c1c;">(12,333)</div>
<div class="t" style="left:1468.63px;top:1482px;line-height:16px;font-size:14.15px;color:#1c1c1c;">(4,000)</div>
<div class="t" style="left:1624.41px;top:1482px;line-height:16px;font-size:14.15px;color:#1c1c1c;">-</div>
<div class="t" style="left:1743.41px;top:1482px;line-height:16px;font-size:14.15px;color:#1c1c1c;">-</div>
<div class="t" style="left:1862.41px;top:1482px;line-height:16px;font-size:14.15px;color:#1c1c1c;">-</div>
<div class="t" style="left:1981.41px;top:1482px;line-height:16px;font-size:14.15px;color:#1c1c1c;">-</div>
<div class="t" style="left:2100.41px;top:1482px;line-height:16px;font-size:14.15px;color:#1c1c1c;">-</div>
<div class="t" style="left:2219.41px;top:1482px;line-height:16px;font-size:14.15px;color:#1c1c1c;">-</div>
<div class="t" style="left:2338.41px;top:1482px;line-height:16px;font-size:14.15px;color:#1c1c1c;">-</div>
<div class="t" style="left:2457.41px;top:1482px;line-height:16px;font-size:14.15px;color:#1c1c1c;">-</div>
<div class="t" style="left:2576.41px;top:1482px;line-height:16px;font-size:14.15px;color:#1c1c1c;">-</div>
<div class="t" style="left:2695.41px;top:1482px;line-height:16px;font-size:14.15px;color:#1c1c1c;">-</div>
<div class="t" style="left:2814.41px;top:1482px;line-height:16px;font-size:14.15px;color:#1c1c1c;">-</div>
<div class="t" style="left:139.4px;top:1501px;line-height:19px;font-size:16px;color:#1c1c1c;letter-spacing:-0.12px;">Net Cash Flow from Financing Activities</div>
<div class="t" style="left:862.38px;top:1502px;line-height:16px;font-size:14.15px;color:#1c1c1c;">900,000</div>
<div class="t" style="left:1029.41px;top:1502px;line-height:16px;font-size:14.15px;color:#1c1c1c;">-</div>
<div class="t" style="left:1108.47px;top:1502px;line-height:16px;font-size:14.15px;color:#1c1c1c;">98,333</div>
<div class="t" style="left:1230.63px;top:1502px;line-height:16px;font-size:14.15px;color:#1c1c1c;">(1,667)</div>
<div class="t" style="left:1349.63px;top:1502px;line-height:16px;font-size:14.15px;color:#1c1c1c;">(1,667)</div>
<div class="t" style="left:1468.63px;top:1502px;line-height:16px;font-size:14.15px;color:#1c1c1c;">(1,667)</div>
<div class="t" style="left:1587.63px;top:1502px;line-height:16px;font-size:14.15px;color:#1c1c1c;">(1,667)</div>
<div class="t" style="left:1706.63px;top:1502px;line-height:16px;font-size:14.15px;color:#1c1c1c;">(1,667)</div>
<div class="t" style="left:1825.63px;top:1502px;line-height:16px;font-size:14.15px;color:#1c1c1c;">(1,667)</div>
<div class="t" style="left:1944.63px;top:1502px;line-height:16px;font-size:14.15px;color:#1c1c1c;">(1,667)</div>
<div class="t" style="left:2063.63px;top:1502px;line-height:16px;font-size:14.15px;color:#1c1c1c;">(1,667)</div>
<div class="t" style="left:2182.63px;top:1502px;line-height:16px;font-size:14.15px;color:#1c1c1c;">(1,667)</div>
<div class="t" style="left:2301.63px;top:1502px;line-height:16px;font-size:14.15px;color:#1c1c1c;">(3,770)</div>
<div class="t" style="left:2420.63px;top:1502px;line-height:16px;font-size:14.15px;color:#1c1c1c;">(3,780)</div>
<div class="t" style="left:2539.63px;top:1502px;line-height:16px;font-size:14.15px;color:#1c1c1c;">(3,791)</div>
<div class="t" style="left:2658.63px;top:1502px;line-height:16px;font-size:14.15px;color:#1c1c1c;">(3,801)</div>
<div class="t" style="left:2777.63px;top:1502px;line-height:16px;font-size:14.15px;color:#1c1c1c;">(3,812)</div>
<div class="t" style="left:139.4px;top:1521px;line-height:19px;font-size:16px;color:#1c1c1c;letter-spacing:-0.44px;">Cash Receipts</div>
<div class="t" style="left:878.57px;top:1522px;line-height:16px;font-size:14.15px;color:#1c1c1c;">7,806</div>
<div class="t" style="left:989.47px;top:1522px;line-height:16px;font-size:14.15px;color:#1c1c1c;">14,979</div>
<div class="t" style="left:1108.47px;top:1522px;line-height:16px;font-size:14.15px;color:#1c1c1c;">18,065</div>
<div class="t" style="left:1227.47px;top:1522px;line-height:16px;font-size:14.15px;color:#1c1c1c;">18,274</div>
<div class="t" style="left:1346.47px;top:1522px;line-height:16px;font-size:14.15px;color:#1c1c1c;">20,270</div>
<div class="t" style="left:1465.47px;top:1522px;line-height:16px;font-size:14.15px;color:#1c1c1c;">20,980</div>
<div class="t" style="left:1584.47px;top:1522px;line-height:16px;font-size:14.15px;color:#1c1c1c;">23,065</div>
<div class="t" style="left:1703.47px;top:1522px;line-height:16px;font-size:14.15px;color:#1c1c1c;">24,085</div>
<div class="t" style="left:1822.47px;top:1522px;line-height:16px;font-size:14.15px;color:#1c1c1c;">24,351</div>
<div class="t" style="left:1941.47px;top:1522px;line-height:16px;font-size:14.15px;color:#1c1c1c;">25,149</div>
<div class="t" style="left:2060.47px;top:1522px;line-height:16px;font-size:14.15px;color:#1c1c1c;">24,351</div>
<div class="t" style="left:2179.47px;top:1522px;line-height:16px;font-size:14.15px;color:#1c1c1c;">25,149</div>
<div class="t" style="left:2298.47px;top:1522px;line-height:16px;font-size:14.15px;color:#1c1c1c;">45,561</div>
<div class="t" style="left:2417.47px;top:1522px;line-height:16px;font-size:14.15px;color:#1c1c1c;">63,687</div>
<div class="t" style="left:2536.47px;top:1522px;line-height:16px;font-size:14.15px;color:#1c1c1c;">75,161</div>
<div class="t" style="left:2655.47px;top:1522px;line-height:16px;font-size:14.15px;color:#1c1c1c;">74,592</div>
<div class="t" style="left:2774.47px;top:1522px;line-height:16px;font-size:14.15px;color:#1c1c1c;">81,388</div>
<div class="t" style="left:139.4px;top:1541px;line-height:19px;font-size:16px;color:#1c1c1c;letter-spacing:-0.36px;">Cash Payments</div>
<div class="t" style="left:865.54px;top:1542px;line-height:16px;font-size:14.15px;color:#1c1c1c;">(19,699)</div>
<div class="t" style="left:984.54px;top:1542px;line-height:16px;font-size:14.15px;color:#1c1c1c;">(34,942)</div>
<div class="t" style="left:1103.54px;top:1542px;line-height:16px;font-size:14.15px;color:#1c1c1c;">(38,790)</div>
<div class="t" style="left:1222.54px;top:1542px;line-height:16px;font-size:14.15px;color:#1c1c1c;">(36,641)</div>
<div class="t" style="left:1341.54px;top:1542px;line-height:16px;font-size:14.15px;color:#1c1c1c;">(37,999)</div>
<div class="t" style="left:1460.54px;top:1542px;line-height:16px;font-size:14.15px;color:#1c1c1c;">(37,092)</div>
<div class="t" style="left:1579.54px;top:1542px;line-height:16px;font-size:14.15px;color:#1c1c1c;">(39,945)</div>
<div class="t" style="left:1698.54px;top:1542px;line-height:16px;font-size:14.15px;color:#1c1c1c;">(41,001)</div>
<div class="t" style="left:1817.54px;top:1542px;line-height:16px;font-size:14.15px;color:#1c1c1c;">(40,419)</div>
<div class="t" style="left:1936.54px;top:1542px;line-height:16px;font-size:14.15px;color:#1c1c1c;">(41,652)</div>
<div class="t" style="left:2055.54px;top:1542px;line-height:16px;font-size:14.15px;color:#1c1c1c;">(40,419)</div>
<div class="t" style="left:2174.54px;top:1542px;line-height:16px;font-size:14.15px;color:#1c1c1c;">(41,652)</div>
<div class="t" style="left:2293.54px;top:1542px;line-height:16px;font-size:14.15px;color:#1c1c1c;">(56,842)</div>
<div class="t" style="left:2412.54px;top:1542px;line-height:16px;font-size:14.15px;color:#1c1c1c;">(65,185)</div>
<div class="t" style="left:2531.54px;top:1542px;line-height:16px;font-size:14.15px;color:#1c1c1c;">(72,188)</div>
<div class="t" style="left:2650.54px;top:1542px;line-height:16px;font-size:14.15px;color:#1c1c1c;">(68,703)</div>
<div class="t" style="left:2769.54px;top:1542px;line-height:16px;font-size:14.15px;color:#1c1c1c;">(71,359)</div>
<div class="t" style="left:139.4px;top:1561px;line-height:19px;font-size:16px;color:#1c1c1c;letter-spacing:-0.03px;">Change in Cash (Pre-Corporate Tax &amp; Interest on Cash)</div>
<div class="t" style="left:862.38px;top:1562px;line-height:16px;font-size:14.15px;color:#1c1c1c;">872,191</div>
<div class="t" style="left:984.54px;top:1562px;line-height:16px;font-size:14.15px;color:#1c1c1c;">(37,880)</div>
<div class="t" style="left:1108.47px;top:1562px;line-height:16px;font-size:14.15px;color:#1c1c1c;">52,609</div>
<div class="t" style="left:1222.54px;top:1562px;line-height:16px;font-size:14.15px;color:#1c1c1c;">(37,367)</div>
<div class="t" style="left:1341.54px;top:1562px;line-height:16px;font-size:14.15px;color:#1c1c1c;">(31,729)</div>
<div class="t" style="left:1460.54px;top:1562px;line-height:16px;font-size:14.15px;color:#1c1c1c;">(21,779)</div>
<div class="t" style="left:1579.54px;top:1562px;line-height:16px;font-size:14.15px;color:#1c1c1c;">(18,547)</div>
<div class="t" style="left:1698.54px;top:1562px;line-height:16px;font-size:14.15px;color:#1c1c1c;">(18,583)</div>
<div class="t" style="left:1817.54px;top:1562px;line-height:16px;font-size:14.15px;color:#1c1c1c;">(17,735)</div>
<div class="t" style="left:1936.54px;top:1562px;line-height:16px;font-size:14.15px;color:#1c1c1c;">(18,170)</div>
<div class="t" style="left:2055.54px;top:1562px;line-height:16px;font-size:14.15px;color:#1c1c1c;">(17,735)</div>
<div class="t" style="left:2174.54px;top:1562px;line-height:16px;font-size:14.15px;color:#1c1c1c;">(18,170)</div>
<div class="t" style="left:2293.54px;top:1562px;line-height:16px;font-size:14.15px;color:#1c1c1c;">(15,050)</div>
<div class="t" style="left:2420.63px;top:1562px;line-height:16px;font-size:14.15px;color:#1c1c1c;">(5,278)</div>
<div class="t" style="left:2551.77px;top:1562px;line-height:16px;font-size:14.15px;color:#1c1c1c;">(818)</div>
<div class="t" style="left:2663.57px;top:1562px;line-height:16px;font-size:14.15px;color:#1c1c1c;">2,087</div>
<div class="t" style="left:2782.57px;top:1562px;line-height:16px;font-size:14.15px;color:#1c1c1c;">6,217</div>
<div class="t" style="left:139.4px;top:1581px;line-height:19px;font-size:16px;color:#1c1c1c;letter-spacing:-0.3px;">Interest Expense</div>
<div class="t" style="left:873.63px;top:1582px;line-height:16px;font-size:14.15px;color:#1c1c1c;">(1,000)</div>
<div class="t" style="left:992.63px;top:1582px;line-height:16px;font-size:14.15px;color:#1c1c1c;">(1,000)</div>
<div class="t" style="left:1111.63px;top:1582px;line-height:16px;font-size:14.15px;color:#1c1c1c;">(1,667)</div>
<div class="t" style="left:1230.63px;top:1582px;line-height:16px;font-size:14.15px;color:#1c1c1c;">(1,656)</div>
<div class="t" style="left:1349.63px;top:1582px;line-height:16px;font-size:14.15px;color:#1c1c1c;">(1,644)</div>
<div class="t" style="left:1468.63px;top:1582px;line-height:16px;font-size:14.15px;color:#1c1c1c;">(1,633)</div>
<div class="t" style="left:1587.63px;top:1582px;line-height:16px;font-size:14.15px;color:#1c1c1c;">(1,622)</div>
<div class="t" style="left:1706.63px;top:1582px;line-height:16px;font-size:14.15px;color:#1c1c1c;">(1,611)</div>
<div class="t" style="left:1825.63px;top:1582px;line-height:16px;font-size:14.15px;color:#1c1c1c;">(1,600)</div>
<div class="t" style="left:1944.63px;top:1582px;line-height:16px;font-size:14.15px;color:#1c1c1c;">(1,589)</div>
<div class="t" style="left:2063.63px;top:1582px;line-height:16px;font-size:14.15px;color:#1c1c1c;">(1,578)</div>
<div class="t" style="left:2182.63px;top:1582px;line-height:16px;font-size:14.15px;color:#1c1c1c;">(1,567)</div>
<div class="t" style="left:2301.63px;top:1582px;line-height:16px;font-size:14.15px;color:#1c1c1c;">(1,556)</div>
<div class="t" style="left:2420.63px;top:1582px;line-height:16px;font-size:14.15px;color:#1c1c1c;">(1,534)</div>
<div class="t" style="left:2539.63px;top:1582px;line-height:16px;font-size:14.15px;color:#1c1c1c;">(1,512)</div>
<div class="t" style="left:2658.63px;top:1582px;line-height:16px;font-size:14.15px;color:#1c1c1c;">(1,491)</div>
<div class="t" style="left:2777.63px;top:1582px;line-height:16px;font-size:14.15px;color:#1c1c1c;">(1,469)</div>
<div class="t" style="left:139.4px;top:1601px;line-height:19px;font-size:16px;color:#1c1c1c;letter-spacing:-0.11px;">Corporate Tax Expense</div>
<div class="t" style="left:910.41px;top:1602px;line-height:16px;font-size:14.15px;color:#1c1c1c;">-</div>
<div class="t" style="left:1029.41px;top:1602px;line-height:16px;font-size:14.15px;color:#1c1c1c;">-</div>
<div class="t" style="left:1148.41px;top:1602px;line-height:16px;font-size:14.15px;color:#1c1c1c;">-</div>
<div class="t" style="left:1267.41px;top:1602px;line-height:16px;font-size:14.15px;color:#1c1c1c;">-</div>
<div class="t" style="left:1386.41px;top:1602px;line-height:16px;font-size:14.15px;color:#1c1c1c;">-</div>
<div class="t" style="left:1505.41px;top:1602px;line-height:16px;font-size:14.15px;color:#1c1c1c;">-</div>
<div class="t" style="left:1624.41px;top:1602px;line-height:16px;font-size:14.15px;color:#1c1c1c;">-</div>
<div class="t" style="left:1743.41px;top:1602px;line-height:16px;font-size:14.15px;color:#1c1c1c;">-</div>
<div class="t" style="left:1862.41px;top:1602px;line-height:16px;font-size:14.15px;color:#1c1c1c;">-</div>
<div class="t" style="left:1981.41px;top:1602px;line-height:16px;font-size:14.15px;color:#1c1c1c;">-</div>
<div class="t" style="left:2100.41px;top:1602px;line-height:16px;font-size:14.15px;color:#1c1c1c;">-</div>
<div class="t" style="left:2219.41px;top:1602px;line-height:16px;font-size:14.15px;color:#1c1c1c;">-</div>
<div class="t" style="left:2338.41px;top:1602px;line-height:16px;font-size:14.15px;color:#1c1c1c;">-</div>
<div class="t" style="left:2457.41px;top:1602px;line-height:16px;font-size:14.15px;color:#1c1c1c;">-</div>
<div class="t" style="left:2551.77px;top:1602px;line-height:16px;font-size:14.15px;color:#1c1c1c;">(536)</div>
<div class="t" style="left:2658.63px;top:1602px;line-height:16px;font-size:14.15px;color:#1c1c1c;">(1,411)</div>
<div class="t" style="left:2777.63px;top:1602px;line-height:16px;font-size:14.15px;color:#1c1c1c;">(2,286)</div>
<div class="t b" style="left:146.2px;top:628px;line-height:19px;font-size:16px;letter-spacing:-0.02px;">Net Cash Flow from Operating Activities</div>
<div class="s b" style="left:849.51px;top:628px;line-height:19px;font-size:15.6px;letter-spacing:0.3px;">(12,893)</div>
<div class="s b" style="left:968.51px;top:628px;line-height:19px;font-size:15.6px;letter-spacing:0.3px;">(20,963)</div>
<div class="s b" style="left:1087.51px;top:628px;line-height:19px;font-size:15.6px;letter-spacing:0.3px;">(22,391)</div>
<div class="s b" style="left:1206.51px;top:628px;line-height:19px;font-size:15.6px;letter-spacing:0.3px;">(20,022)</div>
<div class="s b" style="left:1325.51px;top:628px;line-height:19px;font-size:15.6px;letter-spacing:0.3px;">(19,373)</div>
<div class="s b" style="left:1444.51px;top:628px;line-height:19px;font-size:15.6px;letter-spacing:0.3px;">(17,746)</div>
<div class="s b" style="left:1563.51px;top:628px;line-height:19px;font-size:15.6px;letter-spacing:0.3px;">(18,503)</div>
<div class="s b" style="left:1682.51px;top:628px;line-height:19px;font-size:15.6px;letter-spacing:0.3px;">(18,528)</div>
<div class="s b" style="left:1801.51px;top:628px;line-height:19px;font-size:15.6px;letter-spacing:0.3px;">(17,668)</div>
<div class="s b" style="left:1920.51px;top:628px;line-height:19px;font-size:15.6px;letter-spacing:0.3px;">(18,092)</div>
<div class="s b" style="left:2039.51px;top:628px;line-height:19px;font-size:15.6px;letter-spacing:0.3px;">(17,646)</div>
<div class="s b" style="left:2158.51px;top:628px;line-height:19px;font-size:15.6px;letter-spacing:0.3px;">(18,070)</div>
<div class="s b" style="left:2277.51px;top:628px;line-height:19px;font-size:15.6px;letter-spacing:0.3px;">(12,836)</div>
<div class="s b" style="left:2406.57px;top:628px;line-height:19px;font-size:15.6px;letter-spacing:0.3px;">(3,032)</div>
<div class="s b" style="left:2548px;top:628px;line-height:19px;font-size:15.6px;letter-spacing:0.3px;">924</div>
<div class="s b" style="left:2651.75px;top:628px;line-height:19px;font-size:15.6px;letter-spacing:0.3px;">2,987</div>
<div class="s b" style="left:2770.75px;top:628px;line-height:19px;font-size:15.6px;letter-spacing:0.3px;">6,274</div>
<div class="t b" style="left:146.2px;top:715px;line-height:19px;font-size:16px;letter-spacing:0.01px;">Net Cash Flow from Investing Activities</div>
<div class="s b" style="left:849.51px;top:716px;line-height:19px;font-size:15.6px;letter-spacing:0.3px;">(15,917)</div>
<div class="s b" style="left:968.51px;top:716px;line-height:19px;font-size:15.6px;letter-spacing:0.3px;">(17,917)</div>
<div class="s b" style="left:1087.51px;top:716px;line-height:19px;font-size:15.6px;letter-spacing:0.3px;">(25,000)</div>
<div class="s b" style="left:1206.51px;top:716px;line-height:19px;font-size:15.6px;letter-spacing:0.3px;">(17,333)</div>
<div class="s b" style="left:1325.51px;top:716px;line-height:19px;font-size:15.6px;letter-spacing:0.3px;">(12,333)</div>
<div class="s b" style="left:1454.57px;top:716px;line-height:19px;font-size:15.6px;letter-spacing:0.3px;">(4,000)</div>
<div class="s b" style="left:1619.67px;top:716px;line-height:19px;font-size:15.6px;color:#bfe3f7;">-</div>
<div class="s b" style="left:1738.67px;top:716px;line-height:19px;font-size:15.6px;color:#bfe3f7;">-</div>
<div class="s b" style="left:1857.67px;top:716px;line-height:19px;font-size:15.6px;color:#bfe3f7;">-</div>
<div class="s b" style="left:1976.67px;top:716px;line-height:19px;font-size:15.6px;color:#bfe3f7;">-</div>
<div class="s b" style="left:2095.67px;top:716px;line-height:19px;font-size:15.6px;color:#bfe3f7;">-</div>
<div class="s b" style="left:2214.67px;top:716px;line-height:19px;font-size:15.6px;color:#bfe3f7;">-</div>
<div class="s b" style="left:2333.67px;top:716px;line-height:19px;font-size:15.6px;color:#bfe3f7;">-</div>
<div class="s b" style="left:2452.67px;top:716px;line-height:19px;font-size:15.6px;color:#bfe3f7;">-</div>
<div class="s b" style="left:2571.67px;top:716px;line-height:19px;font-size:15.6px;color:#bfe3f7;">-</div>
<div class="s b" style="left:2690.67px;top:716px;line-height:19px;font-size:15.6px;color:#bfe3f7;">-</div>
<div class="s b" style="left:2809.67px;top:716px;line-height:19px;font-size:15.6px;color:#bfe3f7;">-</div>
<div class="t b" style="left:146.2px;top:880px;line-height:19px;font-size:16px;letter-spacing:-0.06px;">Net Cash Flow from Financing Activities</div>
<div class="s b" style="left:846.62px;top:880px;line-height:19px;font-size:15.6px;letter-spacing:0.3px;">900,000</div>
<div class="s b" style="left:1024.67px;top:880px;line-height:19px;font-size:15.6px;color:#bfe3f7;">-</div>
<div class="s b" style="left:1094.69px;top:880px;line-height:19px;font-size:15.6px;letter-spacing:0.3px;">98,333</div>
<div class="s b" style="left:1216.57px;top:880px;line-height:19px;font-size:15.6px;letter-spacing:0.3px;">(1,667)</div>
<div class="s b" style="left:1335.57px;top:880px;line-height:19px;font-size:15.6px;letter-spacing:0.3px;">(1,667)</div>
<div class="s b" style="left:1454.57px;top:880px;line-height:19px;font-size:15.6px;letter-spacing:0.3px;">(1,667)</div>
<div class="s b" style="left:1573.57px;top:880px;line-height:19px;font-size:15.6px;letter-spacing:0.3px;">(1,667)</div>
<div class="s b" style="left:1692.57px;top:880px;line-height:19px;font-size:15.6px;letter-spacing:0.3px;">(1,667)</div>
<div class="s b" style="left:1811.57px;top:880px;line-height:19px;font-size:15.6px;letter-spacing:0.3px;">(1,667)</div>
<div class="s b" style="left:1930.57px;top:880px;line-height:19px;font-size:15.6px;letter-spacing:0.3px;">(1,667)</div>
<div class="s b" style="left:2049.57px;top:880px;line-height:19px;font-size:15.6px;letter-spacing:0.3px;">(1,667)</div>
<div class="s b" style="left:2168.57px;top:880px;line-height:19px;font-size:15.6px;letter-spacing:0.3px;">(1,667)</div>
<div class="s b" style="left:2287.57px;top:880px;line-height:19px;font-size:15.6px;letter-spacing:0.3px;">(3,770)</div>
<div class="s b" style="left:2406.57px;top:880px;line-height:19px;font-size:15.6px;letter-spacing:0.3px;">(3,780)</div>
<div class="s b" style="left:2525.57px;top:880px;line-height:19px;font-size:15.6px;letter-spacing:0.3px;">(3,791)</div>
<div class="s b" style="left:2644.57px;top:880px;line-height:19px;font-size:15.6px;letter-spacing:0.3px;">(3,801)</div>
<div class="s b" style="left:2763.57px;top:880px;line-height:19px;font-size:15.6px;letter-spacing:0.3px;">(3,812)</div>
<div class="t b" style="left:146.2px;top:917px;line-height:19px;font-size:16px;letter-spacing:0.14px;">Net Increase/(Decrease) in Cash Held</div>
<div class="s b" style="left:846.62px;top:917px;line-height:19px;font-size:15.6px;letter-spacing:0.3px;">871,191</div>
<div class="s b" style="left:968.51px;top:917px;line-height:19px;font-size:15.6px;letter-spacing:0.3px;">(38,880)</div>
<div class="s b" style="left:1094.69px;top:917px;line-height:19px;font-size:15.6px;letter-spacing:0.3px;">50,942</div>
<div class="s b" style="left:1206.51px;top:917px;line-height:19px;font-size:15.6px;letter-spacing:0.3px;">(39,022)</div>
<div class="s b" style="left:1325.51px;top:917px;line-height:19px;font-size:15.6px;letter-spacing:0.3px;">(33,373)</div>
<div class="s b" style="left:1444.51px;top:917px;line-height:19px;font-size:15.6px;letter-spacing:0.3px;">(23,413)</div>
<div class="s b" style="left:1563.51px;top:917px;line-height:19px;font-size:15.6px;letter-spacing:0.3px;">(20,170)</div>
<div class="s b" style="left:1682.51px;top:917px;line-height:19px;font-size:15.6px;letter-spacing:0.3px;">(20,195)</div>
<div class="s b" style="left:1801.51px;top:917px;line-height:19px;font-size:15.6px;letter-spacing:0.3px;">(19,335)</div>
<div class="s b" style="left:1920.51px;top:917px;line-height:19px;font-size:15.6px;letter-spacing:0.3px;">(19,759)</div>
<div class="s b" style="left:2039.51px;top:917px;line-height:19px;font-size:15.6px;letter-spacing:0.3px;">(19,313)</div>
<div class="s b" style="left:2158.51px;top:917px;line-height:19px;font-size:15.6px;letter-spacing:0.3px;">(19,737)</div>
<div class="s b" style="left:2277.51px;top:917px;line-height:19px;font-size:15.6px;letter-spacing:0.3px;">(16,605)</div>
<div class="s b" style="left:2406.57px;top:917px;line-height:19px;font-size:15.6px;letter-spacing:0.3px;">(6,812)</div>
<div class="s b" style="left:2525.57px;top:917px;line-height:19px;font-size:15.6px;letter-spacing:0.3px;">(2,866)</div>
<div class="s b" style="left:2659.82px;top:917px;line-height:19px;font-size:15.6px;letter-spacing:0.3px;">(815)</div>
<div class="s b" style="left:2770.75px;top:917px;line-height:19px;font-size:15.6px;letter-spacing:0.3px;">2,462</div>
<div class="t b" style="left:134px;top:1069px;line-height:19px;font-size:16px;letter-spacing:0.11px;">Total Operating Activities</div>
<div class="s b" style="left:849.51px;top:1069px;line-height:19px;font-size:15.6px;letter-spacing:0.3px;">(12,893)</div>
<div class="s b" style="left:968.51px;top:1069px;line-height:19px;font-size:15.6px;letter-spacing:0.3px;">(20,963)</div>
<div class="s b" style="left:1087.51px;top:1069px;line-height:19px;font-size:15.6px;letter-spacing:0.3px;">(22,391)</div>
<div class="s b" style="left:1206.51px;top:1069px;line-height:19px;font-size:15.6px;letter-spacing:0.3px;">(20,022)</div>
<div class="s b" style="left:1325.51px;top:1069px;line-height:19px;font-size:15.6px;letter-spacing:0.3px;">(19,373)</div>
<div class="s b" style="left:1444.51px;top:1069px;line-height:19px;font-size:15.6px;letter-spacing:0.3px;">(17,746)</div>
<div class="s b" style="left:1563.51px;top:1069px;line-height:19px;font-size:15.6px;letter-spacing:0.3px;">(18,503)</div>
<div class="s b" style="left:1682.51px;top:1069px;line-height:19px;font-size:15.6px;letter-spacing:0.3px;">(18,528)</div>
<div class="s b" style="left:1801.51px;top:1069px;line-height:19px;font-size:15.6px;letter-spacing:0.3px;">(17,668)</div>
<div class="s b" style="left:1920.51px;top:1069px;line-height:19px;font-size:15.6px;letter-spacing:0.3px;">(18,092)</div>
<div class="s b" style="left:2039.51px;top:1069px;line-height:19px;font-size:15.6px;letter-spacing:0.3px;">(17,646)</div>
<div class="s b" style="left:2158.51px;top:1069px;line-height:19px;font-size:15.6px;letter-spacing:0.3px;">(18,070)</div>
<div class="s b" style="left:2277.51px;top:1069px;line-height:19px;font-size:15.6px;letter-spacing:0.3px;">(12,836)</div>
<div class="s b" style="left:2406.57px;top:1069px;line-height:19px;font-size:15.6px;letter-spacing:0.3px;">(3,032)</div>
<div class="s b" style="left:2548px;top:1069px;line-height:19px;font-size:15.6px;letter-spacing:0.3px;">924</div>
<div class="s b" style="left:2651.75px;top:1069px;line-height:19px;font-size:15.6px;letter-spacing:0.3px;">2,987</div>
<div class="s b" style="left:2770.75px;top:1069px;line-height:19px;font-size:15.6px;letter-spacing:0.3px;">6,274</div>
<div class="t b" style="left:134px;top:1153px;line-height:19px;font-size:16px;letter-spacing:0.1px;">Total Cash From (For) Investing Activities</div>
<div class="s b" style="left:849.51px;top:1153px;line-height:19px;font-size:15.6px;letter-spacing:0.3px;">(15,917)</div>
<div class="s b" style="left:968.51px;top:1153px;line-height:19px;font-size:15.6px;letter-spacing:0.3px;">(17,917)</div>
<div class="s b" style="left:1087.51px;top:1153px;line-height:19px;font-size:15.6px;letter-spacing:0.3px;">(25,000)</div>
<div class="s b" style="left:1206.51px;top:1153px;line-height:19px;font-size:15.6px;letter-spacing:0.3px;">(17,333)</div>
<div class="s b" style="left:1325.51px;top:1153px;line-height:19px;font-size:15.6px;letter-spacing:0.3px;">(12,333)</div>
<div class="s b" style="left:1454.57px;top:1153px;line-height:19px;font-size:15.6px;letter-spacing:0.3px;">(4,000)</div>
<div class="s b" style="left:1619.67px;top:1153px;line-height:19px;font-size:15.6px;color:#bfe3f7;">-</div>
<div class="s b" style="left:1738.67px;top:1153px;line-height:19px;font-size:15.6px;color:#bfe3f7;">-</div>
<div class="s b" style="left:1857.67px;top:1153px;line-height:19px;font-size:15.6px;color:#bfe3f7;">-</div>
<div class="s b" style="left:1976.67px;top:1153px;line-height:19px;font-size:15.6px;color:#bfe3f7;">-</div>
<div class="s b" style="left:2095.67px;top:1153px;line-height:19px;font-size:15.6px;color:#bfe3f7;">-</div>
<div class="s b" style="left:2214.67px;top:1153px;line-height:19px;font-size:15.6px;color:#bfe3f7;">-</div>
<div class="s b" style="left:2333.67px;top:1153px;line-height:19px;font-size:15.6px;color:#bfe3f7;">-</div>
<div class="s b" style="left:2452.67px;top:1153px;line-height:19px;font-size:15.6px;color:#bfe3f7;">-</div>
<div class="s b" style="left:2571.67px;top:1153px;line-height:19px;font-size:15.6px;color:#bfe3f7;">-</div>
<div class="s b" style="left:2690.67px;top:1153px;line-height:19px;font-size:15.6px;color:#bfe3f7;">-</div>
<div class="s b" style="left:2809.67px;top:1153px;line-height:19px;font-size:15.6px;color:#bfe3f7;">-</div>
<div class="t b" style="left:134px;top:1273px;line-height:19px;font-size:16px;letter-spacing:0.04px;">Total Cash From (For) Financing Activities</div>
<div class="s b" style="left:846.62px;top:1273px;line-height:19px;font-size:15.6px;letter-spacing:0.3px;">900,000</div>
<div class="s b" style="left:1024.67px;top:1273px;line-height:19px;font-size:15.6px;color:#bfe3f7;">-</div>
<div class="s b" style="left:1094.69px;top:1273px;line-height:19px;font-size:15.6px;letter-spacing:0.3px;">98,333</div>
<div class="s b" style="left:1216.57px;top:1273px;line-height:19px;font-size:15.6px;letter-spacing:0.3px;">(1,667)</div>
<div class="s b" style="left:1335.57px;top:1273px;line-height:19px;font-size:15.6px;letter-spacing:0.3px;">(1,667)</div>
<div class="s b" style="left:1454.57px;top:1273px;line-height:19px;font-size:15.6px;letter-spacing:0.3px;">(1,667)</div>
<div class="s b" style="left:1573.57px;top:1273px;line-height:19px;font-size:15.6px;letter-spacing:0.3px;">(1,667)</div>
<div class="s b" style="left:1692.57px;top:1273px;line-height:19px;font-size:15.6px;letter-spacing:0.3px;">(1,667)</div>
<div class="s b" style="left:1811.57px;top:1273px;line-height:19px;font-size:15.6px;letter-spacing:0.3px;">(1,667)</div>
<div class="s b" style="left:1930.57px;top:1273px;line-height:19px;font-size:15.6px;letter-spacing:0.3px;">(1,667)</div>
<div class="s b" style="left:2049.57px;top:1273px;line-height:19px;font-size:15.6px;letter-spacing:0.3px;">(1,667)</div>
<div class="s b" style="left:2168.57px;top:1273px;line-height:19px;font-size:15.6px;letter-spacing:0.3px;">(1,667)</div>
<div class="s b" style="left:2287.57px;top:1273px;line-height:19px;font-size:15.6px;letter-spacing:0.3px;">(3,770)</div>
<div class="s b" style="left:2406.57px;top:1273px;line-height:19px;font-size:15.6px;letter-spacing:0.3px;">(3,780)</div>
<div class="s b" style="left:2525.57px;top:1273px;line-height:19px;font-size:15.6px;letter-spacing:0.3px;">(3,791)</div>
<div class="s b" style="left:2644.57px;top:1273px;line-height:19px;font-size:15.6px;letter-spacing:0.3px;">(3,801)</div>
<div class="s b" style="left:2763.57px;top:1273px;line-height:19px;font-size:15.6px;letter-spacing:0.3px;">(3,812)</div>
<div class="t b" style="left:134px;top:1385px;line-height:19px;font-size:16px;letter-spacing:0.02px;">Total Cash and Cash Equivalents End</div>
<div class="s b" style="left:846.62px;top:1385px;line-height:19px;font-size:15.6px;letter-spacing:0.3px;">871,191</div>
<div class="s b" style="left:965.62px;top:1385px;line-height:19px;font-size:15.6px;letter-spacing:0.3px;">832,311</div>
<div class="s b" style="left:1084.62px;top:1385px;line-height:19px;font-size:15.6px;letter-spacing:0.3px;">883,253</div>
<div class="s b" style="left:1203.62px;top:1385px;line-height:19px;font-size:15.6px;letter-spacing:0.3px;">844,230</div>
<div class="s b" style="left:1322.62px;top:1385px;line-height:19px;font-size:15.6px;letter-spacing:0.3px;">810,857</div>
<div class="s b" style="left:1441.62px;top:1385px;line-height:19px;font-size:15.6px;letter-spacing:0.3px;">787,445</div>
<div class="s b" style="left:1560.62px;top:1385px;line-height:19px;font-size:15.6px;letter-spacing:0.3px;">767,275</div>
<div class="s b" style="left:1679.62px;top:1385px;line-height:19px;font-size:15.6px;letter-spacing:0.3px;">747,080</div>
<div class="s b" style="left:1798.62px;top:1385px;line-height:19px;font-size:15.6px;letter-spacing:0.3px;">727,745</div>
<div class="s b" style="left:1917.62px;top:1385px;line-height:19px;font-size:15.6px;letter-spacing:0.3px;">707,987</div>
<div class="s b" style="left:2036.62px;top:1385px;line-height:19px;font-size:15.6px;letter-spacing:0.3px;">688,674</div>
<div class="s b" style="left:2155.62px;top:1385px;line-height:19px;font-size:15.6px;letter-spacing:0.3px;">668,937</div>
<div class="s b" style="left:2274.62px;top:1385px;line-height:19px;font-size:15.6px;letter-spacing:0.3px;">652,332</div>
<div class="s b" style="left:2393.62px;top:1385px;line-height:19px;font-size:15.6px;letter-spacing:0.3px;">645,520</div>
<div class="s b" style="left:2512.62px;top:1385px;line-height:19px;font-size:15.6px;letter-spacing:0.3px;">642,653</div>
<div class="s b" style="left:2631.62px;top:1385px;line-height:19px;font-size:15.6px;letter-spacing:0.3px;">641,839</div>
<div class="s b" style="left:2750.62px;top:1385px;line-height:19px;font-size:15.6px;letter-spacing:0.3px;">644,301</div>
<div class="t b" style="left:146.2px;top:1621px;line-height:19px;font-size:16px;letter-spacing:0.14px;">Net Increase/(Decrease) in Cash Held</div>
<div class="s b" style="left:846.62px;top:1621px;line-height:19px;font-size:15.6px;letter-spacing:0.3px;">871,191</div>
<div class="s b" style="left:968.51px;top:1621px;line-height:19px;font-size:15.6px;letter-spacing:0.3px;">(38,880)</div>
<div class="s b" style="left:1094.69px;top:1621px;line-height:19px;font-size:15.6px;letter-spacing:0.3px;">50,942</div>
<div class="s b" style="left:1206.51px;top:1621px;line-height:19px;font-size:15.6px;letter-spacing:0.3px;">(39,022)</div>
<div class="s b" style="left:1325.51px;top:1621px;line-height:19px;font-size:15.6px;letter-spacing:0.3px;">(33,373)</div>
<div class="s b" style="left:1444.51px;top:1621px;line-height:19px;font-size:15.6px;letter-spacing:0.3px;">(23,413)</div>
<div class="s b" style="left:1563.51px;top:1621px;line-height:19px;font-size:15.6px;letter-spacing:0.3px;">(20,170)</div>
<div class="s b" style="left:1682.51px;top:1621px;line-height:19px;font-size:15.6px;letter-spacing:0.3px;">(20,195)</div>
<div class="s b" style="left:1801.51px;top:1621px;line-height:19px;font-size:15.6px;letter-spacing:0.3px;">(19,335)</div>
<div class="s b" style="left:1920.51px;top:1621px;line-height:19px;font-size:15.6px;letter-spacing:0.3px;">(19,759)</div>
<div class="s b" style="left:2039.51px;top:1621px;line-height:19px;font-size:15.6px;letter-spacing:0.3px;">(19,313)</div>
<div class="s b" style="left:2158.51px;top:1621px;line-height:19px;font-size:15.6px;letter-spacing:0.3px;">(19,737)</div>
<div class="s b" style="left:2277.51px;top:1621px;line-height:19px;font-size:15.6px;letter-spacing:0.3px;">(16,605)</div>
<div class="s b" style="left:2406.57px;top:1621px;line-height:19px;font-size:15.6px;letter-spacing:0.3px;">(6,812)</div>
<div class="s b" style="left:2525.57px;top:1621px;line-height:19px;font-size:15.6px;letter-spacing:0.3px;">(2,866)</div>
<div class="s b" style="left:2659.82px;top:1621px;line-height:19px;font-size:15.6px;letter-spacing:0.3px;">(815)</div>
<div class="s b" style="left:2770.75px;top:1621px;line-height:19px;font-size:15.6px;letter-spacing:0.3px;">2,462</div>
<div class="s b" style="left:787.67px;top:1385px;line-height:19px;font-size:15.6px;color:#bfe3f7;">-</div>
<div style="left:95.6px;top:37px;line-height:21px;font-size:19.3px;transform:scaleX(0.9093);transform-origin:0 0;">health-wellness-online-store.xlsx</div>
<div style="left:359.97px;top:37px;line-height:21px;font-size:19.3px;transform:scaleX(0.8500);transform-origin:0 0;">-</div>
<div style="left:377px;top:37px;line-height:21px;font-size:19.3px;transform:scaleX(0.8813);transform-origin:0 0;">Read-Only</div>
<div style="left:42px;top:96px;line-height:22px;font-size:19.9px;transform:scaleX(0.9293);transform-origin:0 0;">File</div>
<div class="b" style="left:111.7px;top:96px;line-height:22px;font-size:19.9px;transform:scaleX(0.9857);transform-origin:0 0;">Home</div>
<div style="left:198.5px;top:96px;line-height:22px;font-size:19.9px;transform:scaleX(0.9403);transform-origin:0 0;">Insert</div>
<div style="left:277.8px;top:96px;line-height:22px;font-size:19.9px;transform:scaleX(0.9485);transform-origin:0 0;">Draw</div>
<div style="left:353.4px;top:96px;line-height:22px;font-size:19.9px;transform:scaleX(0.9413);transform-origin:0 0;">Page Layout</div>
<div style="left:491.5px;top:96px;line-height:22px;font-size:19.9px;transform:scaleX(0.9574);transform-origin:0 0;">Formulas</div>
<div style="left:601px;top:96px;line-height:22px;font-size:19.9px;transform:scaleX(0.9444);transform-origin:0 0;">Data</div>
<div style="left:671.9px;top:96px;line-height:22px;font-size:19.9px;transform:scaleX(0.9035);transform-origin:0 0;">Review</div>
<div style="left:762.4px;top:96px;line-height:22px;font-size:19.9px;transform:scaleX(0.9408);transform-origin:0 0;">View</div>
<div style="left:834.6px;top:96px;line-height:22px;font-size:19.9px;transform:scaleX(1.0131);transform-origin:0 0;">Automate</div>
<div style="left:952.1px;top:96px;line-height:22px;font-size:19.9px;transform:scaleX(0.9603);transform-origin:0 0;">Help</div>
<div style="left:111.2px;top:120.1px;width:57.6px;height:3.2px;background:#5cbf8a;border-radius:1.6px;"></div>
<div style="left:2621.3px;top:86.9px;width:134.8px;height:36px;background:#2a2a2a;border:1px solid #707070;border-radius:6px;box-sizing:border-box;"></div>
<div style="left:2653px;top:95px;line-height:22px;font-size:19.4px;transform:scaleX(0.9916);transform-origin:0 0;">Comments</div>
<div style="left:2768.1px;top:86.9px;width:105px;height:36px;background:#3aa865;border-radius:6px;"></div>
<div style="left:2799.8px;top:95px;line-height:22px;font-size:19.4px;color:#0a0a0a;transform:scaleX(0.9272);transform-origin:0 0;">Share</div>
<svg width="2902" height="1762"><rect x="37.8" y="34.9" width="20.4" height="24.3" rx="2.6" fill="#1f7a2c"/><path d="M37.8 44V37.5a2.6 2.6 0 0 1 2.6-2.6H47.2V44Z" fill="#6dd75a"/><path d="M47.2 34.9H55.6a2.6 2.6 0 0 1 2.6 2.6V44H47.2Z" fill="#b5e86b"/><rect x="34.8" y="42.8" width="13.2" height="13.2" rx="2.4" fill="#0e6b3c"/><path d="M38.6 45.6L44.4 53.2M44.4 45.6L38.6 53.2" stroke="#fff" stroke-width="2.1" fill="none"/><path d="M467 44.2L473.7 51.2L480.4 44.2" stroke="#fff" stroke-width="1.7" fill="none"/><circle cx="2489.3" cy="43.6" r="6.4" stroke="#fff" stroke-width="1.6" fill="none"/><path d="M2484.7 48.4L2476.2 57.2" stroke="#fff" stroke-width="1.7" stroke-linecap="round"/><defs><clipPath id="av"><circle cx="2571" cy="46.9" r="18"/></clipPath><filter id="avb" x="-20%" y="-20%" width="140%" height="140%"><feGaussianBlur stdDeviation="1.1"/></filter><linearGradient id="avg" x1="0" y1="0" x2="0" y2="1"><stop offset="0" stop-color="#a3aede"/><stop offset="0.3" stop-color="#b3c3e0"/><stop offset="0.42" stop-color="#b9dedd"/><stop offset="1" stop-color="#b4d6d6"/></linearGradient></defs><g clip-path="url(#av)"><rect x="2553" y="28.9" width="36" height="36" fill="url(#avg)"/><g filter="url(#avb)"><ellipse cx="2572" cy="66.5" rx="13" ry="8.5" fill="#e6ddd6"/><ellipse cx="2571.6" cy="47.4" rx="7.4" ry="11" fill="#b39a92"/><ellipse cx="2571.6" cy="40.5" rx="6.6" ry="4.4" fill="#a99b9b"/><ellipse cx="2570.6" cy="51.5" rx="4.6" ry="6" fill="#9c7e76"/><ellipse cx="2571.6" cy="60.6" rx="4" ry="3.4" fill="#a4827a"/></g><circle cx="2571" cy="46.9" r="17.6" stroke="#f0f2f6" stroke-opacity="0.55" stroke-width="1" fill="none"/></g><path d="M2635 35.4H2646.8L2652.8 43L2641 56.8L2629.2 43Z M2629.2 43H2652.8 M2638 35.4L2637.6 43L2641 56.8L2644.4 43L2644 35.4" stroke="#fff" stroke-width="1.6" fill="none" stroke-linejoin="round"/><path d="M2703.3 45.7H2719" stroke="#fff" stroke-width="1.5"/><rect x="2776" y="42.6" width="11.6" height="11.6" rx="2.6" stroke="#fff" stroke-width="1.5" fill="none"/><path d="M2779.4 39.7H2787.4a3.2 3.2 0 0 1 3.2 3.2V50.8" stroke="#fff" stroke-width="1.5" fill="none"/><path d="M2847.6 39.6L2862.6 54.8M2862.6 39.6L2847.6 54.8" stroke="#fff" stroke-width="1.6"/><path d="M2630 97.2H2644.3V108.4H2636.4L2632.2 112.3V108.4H2630Z" stroke="#fff" stroke-width="1.5" fill="none" stroke-linejoin="round"/><path d="M2781.5 101.5H2776.2V113.2H2789.6V109.6" stroke="#0a0a0a" stroke-width="1.5" fill="none"/><path d="M2779.6 108.6C2780.2 103.4 2783 100.8 2787.2 100.6V97.3L2792.4 102.3L2787.2 107.3V104C2783.8 104 2781.4 105.4 2779.6 108.6Z" stroke="#0a0a0a" stroke-width="1.4" fill="none" stroke-linejoin="round"/><path d="M2858.2 103.7L2862.4 107.9L2866.6 103.7" stroke="#0a0a0a" stroke-width="1.6" fill="none"/></svg>
<div style="left:23px;top:128px;width:2856px;height:149.8px;background:#292929;border-radius:12px 10px 10px 12px;"></div>
<div style="left:52.2px;top:194px;line-height:20px;font-size:18.2px;color:#707070;transform:scaleX(0.8552);transform-origin:0 0;">Paste</div>
<div style="left:142.5px;top:143px;line-height:20px;font-size:18.2px;transform:scaleX(0.9322);transform-origin:0 0;">Cut</div>
<div style="left:142.5px;top:182px;line-height:20px;font-size:18.2px;transform:scaleX(0.9673);transform-origin:0 0;">Copy</div>
<div style="left:142.5px;top:221px;line-height:20px;font-size:18.2px;transform:scaleX(0.9538);transform-origin:0 0;">Format Painter</div>
<div style="left:109.3px;top:253px;line-height:18px;font-size:16.2px;color:#f2f2f2;transform:scaleX(0.9792);transform-origin:0 0;">Clipboard</div>
<div style="left:282px;top:135px;width:1.2px;height:134px;background:#4d4d4d;"></div>
<div style="left:295px;top:146.4px;width:180.8px;height:35.4px;background:transparent;border:1px solid #686868;border-radius:6px;box-sizing:border-box;"></div>
<div style="left:298.8px;top:154px;line-height:21px;font-size:18.4px;transform:scaleX(0.9531);transform-origin:0 0;">Tahoma</div>
<div style="left:479px;top:146.4px;width:64.8px;height:35.4px;background:transparent;border:1px solid #686868;border-radius:6px;box-sizing:border-box;"></div>
<div style="left:482.3px;top:154px;line-height:21px;font-size:18.4px;">8</div>
<div style="left:554.2px;top:147px;line-height:30px;font-size:27px;color:#d2d2d2;">A</div>
<div style="left:595.9px;top:152px;line-height:23px;font-size:21px;color:#d2d2d2;">A</div>
<div class="b" style="left:307.5px;top:200px;line-height:22px;font-size:20.4px;color:#d2d2d2;transform:scaleX(0.86);transform-origin:0 0;">B</div>
<div style="left:348.6px;top:199px;line-height:24px;font-size:21.5px;color:#d2d2d2;font-family:'Liberation Serif',serif;font-style:italic;">I</div>
<div style="left:384.3px;top:200px;line-height:22px;font-size:20px;color:#d2d2d2;">U</div>
<div style="left:383.4px;top:219.3px;width:13.8px;height:1.7px;background:#d2d2d2;"></div>
<div style="left:433.8px;top:193.6px;width:1.2px;height:36.8px;background:#4d4d4d;"></div>
<div style="left:498.8px;top:193.6px;width:1.2px;height:36.8px;background:#4d4d4d;"></div>
<div style="left:508.9px;top:218px;width:24.2px;height:5.7px;background:#fff200;"></div>
<div style="left:574.2px;top:195px;line-height:26px;font-size:23.6px;color:#d2d2d2;">A</div>
<div style="left:569.8px;top:218px;width:24.3px;height:5.7px;background:#ee1111;"></div>
<div style="left:430.5px;top:253px;line-height:18px;font-size:16.2px;color:#f2f2f2;transform:scaleX(0.9378);transform-origin:0 0;">Font</div>
<div style="left:633px;top:135px;width:1.2px;height:134px;background:#4d4d4d;"></div>
<div style="left:685.1px;top:146.4px;width:35.8px;height:35.4px;background:#3b3b3b;border:1px solid #757575;border-radius:6px;box-sizing:border-box;"></div>
<div style="left:763.1px;top:146.4px;width:1.2px;height:35.3px;background:#4d4d4d;"></div>
<div style="left:780.4px;top:160.2px;font-size:16.4px;line-height:16px;color:#d2d2d2;transform:translate(-50%,-50%) rotate(-45deg) scaleX(0.94)">ab</div>
<div style="left:850.9px;top:144.4px;width:1.2px;height:93.2px;background:#4d4d4d;"></div>
<div style="left:870.6px;top:151px;line-height:16px;font-size:14.6px;color:#d2d2d2;">ab</div>
<div style="left:870.6px;top:162px;line-height:16px;font-size:14.6px;color:#d2d2d2;">c</div>
<div style="left:898px;top:155px;line-height:20px;font-size:18.2px;transform:scaleX(0.9512);transform-origin:0 0;">Wrap Text</div>
<div style="left:763.1px;top:193.6px;width:1.2px;height:36.8px;background:#4d4d4d;"></div>
<div style="left:898px;top:202px;line-height:20px;font-size:18.2px;transform:scaleX(0.9723);transform-origin:0 0;">Merge &amp; Center</div>
<div style="left:810.8px;top:253px;line-height:18px;font-size:16.2px;color:#f2f2f2;transform:scaleX(0.9883);transform-origin:0 0;">Alignment</div>
<div style="left:1082.9px;top:135px;width:1.2px;height:134px;background:#4d4d4d;"></div>
<div style="left:1096.3px;top:146.4px;width:217.4px;height:35.4px;background:transparent;border:1px solid #686868;border-radius:6px;box-sizing:border-box;"></div>
<div style="left:1099.9px;top:154px;line-height:21px;font-size:18.4px;transform:scaleX(0.8815);transform-origin:0 0;">General</div>
<div style="left:1107.2px;top:196px;line-height:31px;font-size:28px;color:#d2d2d2;transform:scaleX(0.8);transform-origin:0 0;">$</div>
<div style="left:1163.4px;top:196px;line-height:33px;font-size:29.4px;color:#d2d2d2;transform:scaleX(0.9);transform-origin:0 0;">%</div>
<div class="b" style="left:1208.4px;top:160px;line-height:64px;font-size:58px;color:#d2d2d2;font-family:'Liberation Serif',serif;">,</div>
<div style="left:1235px;top:193.6px;width:1.2px;height:36.8px;background:#4d4d4d;"></div>
<div style="left:1255.2px;top:197px;line-height:16px;font-size:14.2px;color:#d2d2d2;">.0</div>
<div style="left:1248.4px;top:210px;line-height:16px;font-size:14.2px;color:#d2d2d2;">.00</div>
<div style="left:1287.4px;top:197px;line-height:16px;font-size:14.2px;color:#d2d2d2;">.00</div>
<div style="left:1294.4px;top:210px;line-height:16px;font-size:14.2px;color:#d2d2d2;">.0</div>
<div style="left:1163.8px;top:253px;line-height:18px;font-size:16.2px;color:#f2f2f2;transform:scaleX(0.9858);transform-origin:0 0;">Number</div>
<div style="left:1324.9px;top:135px;width:1.2px;height:134px;background:#4d4d4d;"></div>
<svg width="2902" height="1762"><path d="M63 147.6H56V182.4H75" stroke="#8a8a8a" stroke-width="2.4" fill="none"/><path d="M80 147.6H86.6V159" stroke="#8a8a8a" stroke-width="2.4" fill="none"/><path d="M64.2 151.6V145.8H67.6A3.8 3.8 0 0 1 75.2 145.8H78.6V151.6Z" stroke="#8a8a8a" stroke-width="1.8" fill="none"/><rect x="76.2" y="160.4" width="19.2" height="24.8" stroke="#8a8a8a" stroke-width="1.8" fill="#292929"/><path d="M67.3 224.2L71.2 228.43L75.1 224.2" stroke="#707070" stroke-width="1.9" fill="none"/><path d="M119.4 140.6L127.4 158.8M128.6 140.6L120.6 158.8" stroke="#d2d2d2" stroke-width="1.4" fill="none"/><circle cx="119.6" cy="161" r="2.5" stroke="#4aa3e8" stroke-width="1.7" fill="none"/><circle cx="128.4" cy="161" r="2.5" stroke="#4aa3e8" stroke-width="1.7" fill="none"/><path d="M121.4 198.6H112.4V179.6H121.6L125.2 183.2" stroke="#d2d2d2" stroke-width="1.5" fill="none"/><path d="M122 184.6H130.6L135.6 189.6V202.4H122Z M130.4 184.8V190H135.4 M125 194.4H132.6M125 197.8H132.6" stroke="#d2d2d2" stroke-width="1.5" fill="none"/><path d="M211.5 189.2L215.4 193.43L219.3 189.2" stroke="#fff" stroke-width="1.9" fill="none"/><path d="M113.4 228.6L124.6 222.2L130 231.4L122.6 239.4Z" fill="#f2b43c"/><path d="M113.4 228.6L124.6 222.2L130 231.4L127.2 234.4L117.4 228.8Z" fill="#292929" stroke="#d2d2d2" stroke-width="1.4" stroke-linejoin="round"/><path d="M126.4 225.4L132.4 219.2A2.3 2.3 0 0 1 135.8 222.4L129.6 228.6" stroke="#d2d2d2" stroke-width="1.4" fill="none"/><path d="M271.8 258H265.6V264.2" stroke="#fff" stroke-width="1.5" fill="none"/><path d="M269 261.4L275.8 268.2M276.1 262.8V268.5H270.4" stroke="#fff" stroke-width="1.5" fill="none"/><path d="M463.3 162.2L467.2 166.43L471.1 162.2" stroke="#fff" stroke-width="1.9" fill="none"/><path d="M531.1 162.2L535 166.43L538.9 162.2" stroke="#fff" stroke-width="1.9" fill="none"/><path d="M570.3 158L573.6 153.77L576.9 158" stroke="#4aa3e8" stroke-width="1.8" fill="none"/><path d="M609.2 153.6L612.5 157.65L615.8 153.6" stroke="#4aa3e8" stroke-width="1.8" fill="none"/><path d="M415.5 210.4L419.4 214.63L423.3 210.4" stroke="#fff" stroke-width="1.9" fill="none"/><path d="M444.8 200.6H466.4V217.8H444.8Z M455.6 200.6V217.8 M444.8 209.2H466.4" stroke="#d2d2d2" stroke-width="1.6" stroke-dasharray="1.7 1.7" fill="none"/><path d="M444 221.8H467.2" stroke="#fff" stroke-width="2"/><path d="M480.4 210.4L484.3 214.63L488.2 210.4" stroke="#fff" stroke-width="1.9" fill="none"/><path d="M520.6 203.6L513.4 211.6L520 217L528 208.6L520.6 200.4V204.6" stroke="#d2d2d2" stroke-width="1.5" fill="none" stroke-linejoin="round"/><path d="M527.4 206.2C530.4 207.2 531.4 210.6 530.6 214" stroke="#4aa3e8" stroke-width="1.8" fill="none"/><path d="M545.5 210.4L549.4 214.63L553.3 210.4" stroke="#fff" stroke-width="1.9" fill="none"/><path d="M606.5 210.4L610.4 214.63L614.3 210.4" stroke="#fff" stroke-width="1.9" fill="none"/><path d="M622.9 258H616.7V264.2" stroke="#fff" stroke-width="1.5" fill="none"/><path d="M620.1 261.4L626.9 268.2M627.2 262.8V268.5H621.5" stroke="#fff" stroke-width="1.5" fill="none"/><path d="M653.2 152.5H674.9M656.78 158.9H671.32M653.2 165.2H674.9" stroke="#d2d2d2" stroke-width="1.5" fill="none"/><path d="M692.3 157H713.8M695.85 163.2H710.25M692.3 169.4H713.8" stroke="#d2d2d2" stroke-width="1.5" fill="none"/><path d="M731.2 162.7H753M734.8 168.9H749.4M731.2 175.1H753" stroke="#d2d2d2" stroke-width="1.5" fill="none"/><path d="M781.2 173.6L796.4 158.4M790.6 158.2H796.6V164.2" stroke="#4aa3e8" stroke-width="1.8" fill="none"/><path d="M806.4 162.2L810.3 166.43L814.2 162.2" stroke="#fff" stroke-width="1.9" fill="none"/><path d="M888.8 164.4V166.6A4 4 0 0 1 884.8 170.6H880.2M883.8 166.6L879.8 170.6L883.8 174.6" stroke="#4aa3e8" stroke-width="1.8" fill="none"/><path d="M653.2 202.3H674.9M653.2 208.2H667.74M653.2 214.2H674.9M653.2 220.2H667.74" stroke="#d2d2d2" stroke-width="1.5" fill="none"/><path d="M692.3 202.3H713.8M695.85 208.2H710.25M692.3 214.2H713.8M695.85 220.2H710.25" stroke="#d2d2d2" stroke-width="1.5" fill="none"/><path d="M731.2 202.3H753M738.39 208.2H753M731.2 214.2H753M738.39 220.2H753" stroke="#d2d2d2" stroke-width="1.5" fill="none"/><path d="M774.4 202.3H796M786.4 208.2H796M786.4 214.2H796M774.4 220.2H796" stroke="#d2d2d2" stroke-width="1.5" fill="none"/><path d="M775 211.2H783M778.4 207.6L774.8 211.2L778.4 214.8" stroke="#4aa3e8" stroke-width="1.7" fill="none"/><path d="M813.2 202.3H834.8M825.2 208.2H834.8M825.2 214.2H834.8M813.2 220.2H834.8" stroke="#d2d2d2" stroke-width="1.5" fill="none"/><path d="M813.4 211.2H821.6M818.2 207.6L821.8 211.2L818.2 214.8" stroke="#4aa3e8" stroke-width="1.7" fill="none"/><rect x="867.8" y="200.8" width="21.2" height="21.2" stroke="#d2d2d2" stroke-width="1.5" fill="none"/><path d="M878.4 200.8V205.4M878.4 217.4V222" stroke="#d2d2d2" stroke-width="1.5"/><rect x="867.8" y="205.4" width="21.2" height="12" stroke="#4aa3e8" stroke-width="1.6" fill="none"/><path d="M871.4 211.4H885.4M874.2 208.6L871.4 211.4L874.2 214.2M882.6 208.6L885.4 211.4L882.6 214.2" stroke="#4aa3e8" stroke-width="1.5" fill="none"/><path d="M1050.4 210.4L1054.3 214.63L1058.2 210.4" stroke="#fff" stroke-width="1.9" fill="none"/><path d="M1073.2 258H1067V264.2" stroke="#fff" stroke-width="1.5" fill="none"/><path d="M1070.4 261.4L1077.2 268.2M1077.5 262.8V268.5H1071.8" stroke="#fff" stroke-width="1.5" fill="none"/><path d="M1301.4 162.2L1305.3 166.43L1309.2 162.2" stroke="#fff" stroke-width="1.9" fill="none"/><path d="M1138.3 210.4L1142.2 214.63L1146.1 210.4" stroke="#fff" stroke-width="1.9" fill="none"/><path d="M1245.2 206H1256.4M1249 202.2L1245.2 206L1249 209.8" stroke="#4aa3e8" stroke-width="1.7" fill="none"/><path d="M1284 218H1294.6M1290.8 214.2L1294.6 218L1290.8 221.8" stroke="#4aa3e8" stroke-width="1.7" fill="none"/><path d="M1314.7 258H1308.5V264.2" stroke="#fff" stroke-width="1.5" fill="none"/><path d="M1311.9 261.4L1318.7 268.2M1319 262.8V268.5H1313.3" stroke="#fff" stroke-width="1.5" fill="none"/></svg>
<div style="left:1347.9px;top:194px;line-height:20px;font-size:18.2px;transform:scaleX(0.9381);transform-origin:0 0;">Insert</div>
<div style="left:1410px;top:194px;line-height:20px;font-size:18.2px;transform:scaleX(0.9352);transform-origin:0 0;">Delete</div>
<div style="left:1473.1px;top:192px;line-height:20px;font-size:18.2px;transform:scaleX(0.9698);transform-origin:0 0;">Format</div>
<div style="left:1418.6px;top:254px;line-height:18px;font-size:16.2px;color:#f2f2f2;transform:scaleX(0.8749);transform-origin:0 0;">Cells</div>
<div style="left:1543.9px;top:135px;width:1.2px;height:134px;background:#4d4d4d;"></div>
<div style="left:1593.6px;top:143px;line-height:20px;font-size:18.2px;transform:scaleX(0.9711);transform-origin:0 0;">AutoSum</div>
<div style="left:1594.2px;top:182px;line-height:20px;font-size:18.2px;transform:scaleX(0.8129);transform-origin:0 0;">Fill</div>
<div style="left:1593.6px;top:221px;line-height:20px;font-size:18.2px;transform:scaleX(0.8807);transform-origin:0 0;">Clear</div>
<div style="left:1729.6px;top:139px;line-height:26px;font-size:23.6px;color:#4aa3e8;">A</div>
<div style="left:1730.4px;top:161px;line-height:26px;font-size:23.6px;color:#d2d2d2;">Z</div>
<div style="left:1725.4px;top:192px;line-height:20px;font-size:18.2px;transform:scaleX(1.0143);transform-origin:0 0;">Sort &amp;</div>
<div style="left:1724.9px;top:216px;line-height:20px;font-size:18.2px;transform:scaleX(0.8754);transform-origin:0 0;">Filter</div>
<div style="left:1795.7px;top:192px;line-height:20px;font-size:18.2px;transform:scaleX(0.9981);transform-origin:0 0;">Find &amp;</div>
<div style="left:1790.9px;top:216px;line-height:20px;font-size:18.2px;transform:scaleX(0.8856);transform-origin:0 0;">Select</div>
<div style="left:1682.7px;top:254px;line-height:18px;font-size:16.2px;color:#f2f2f2;transform:scaleX(0.9469);transform-origin:0 0;">Editing</div>
<div style="left:1868px;top:135px;width:1.2px;height:134px;background:#4d4d4d;"></div>
<div style="left:1885.5px;top:192px;line-height:20px;font-size:18.2px;transform:scaleX(0.9966);transform-origin:0 0;">Add-ins</div>
<div style="left:1888.4px;top:254px;line-height:18px;font-size:16.2px;color:#f2f2f2;transform:scaleX(0.9649);transform-origin:0 0;">Add-ins</div>
<div style="left:1962.7px;top:135px;width:1.2px;height:134px;background:#4d4d4d;"></div>
<div style="left:1980.6px;top:192px;line-height:20px;font-size:18.2px;transform:scaleX(0.9298);transform-origin:0 0;">Analyze</div>
<div style="left:1992.9px;top:216px;line-height:20px;font-size:18.2px;transform:scaleX(0.9207);transform-origin:0 0;">Data</div>
<div style="left:2056px;top:135px;width:1.2px;height:134px;background:#4d4d4d;"></div>
<div class="b" style="left:2294.8px;top:152.6px;line-height:54px;font-size:49.6px"><span style="display:inline-block;width:116.79px;margin-left:0px;font-size:47.8px;transform:scaleX(0.9998);transform-origin:0 0;-webkit-text-stroke:1.5px #fff">FINM</span><span style="display:inline-block;width:35.59px;margin-left:2.41px;font-size:49px;transform:scaleX(0.9338);transform-origin:0 0;-webkit-text-stroke:1.8px #fff">O</span><span style="display:inline-block;width:198.41px;margin-left:3.41px;font-size:47.8px;transform:scaleX(0.8790);transform-origin:0 0;-webkit-text-stroke:1.5px #fff">DELSLAB</span></div>
<div style="left:2295.4px;top:205px;line-height:39px;font-size:35.2px;letter-spacing:24.42px;">Templates</div>
<svg width="2902" height="1762"><path d="M1348.6 146h41.2v32h-41.2ZM1362.33 146v32M1376.07 146v32M1348.6 156.67h41.2M1348.6 167.33h41.2" stroke="#d2d2d2" stroke-width="1.5" fill="none"/><rect x="1355.4" y="156.2" width="37.4" height="11.6" fill="#5aaeee"/><rect x="1365.6" y="157.4" width="26.2" height="9.2" fill="#1f7fd6"/><rect x="1356" y="159.6" width="9.6" height="4.8" fill="#292929"/><path d="M1376.1 156.4V167.6" stroke="#292929" stroke-width="1.4"/><path d="M1346.2 162H1364M1354.4 153.4L1345.8 162L1354.4 170.6" stroke="#4aa3e8" stroke-width="1.8" fill="none"/><path d="M1364.6 224.2L1368.5 228.43L1372.4 224.2" stroke="#fff" stroke-width="1.9" fill="none"/><path d="M1414 146h41.2v32h-41.2ZM1427.73 146v32M1441.47 146v32M1414 156.67h41.2M1414 167.33h41.2" stroke="#d2d2d2" stroke-width="1.5" fill="none"/><path d="M1420 156.4H1438.4L1444.2 162L1438.4 167.6H1420Z" fill="#1f7fd6"/><path d="M1433.4 156.4V167.6" stroke="#292929" stroke-width="1.4"/><path d="M1440.4 153.6L1456.6 170.6M1456.6 153.6L1440.4 170.6" stroke="#e8484c" stroke-width="1.8"/><path d="M1429.7 224.2L1433.6 228.43L1437.5 224.2" stroke="#fff" stroke-width="1.9" fill="none"/><path d="M1480.2 146H1520.2V178H1480.2ZM1490 146V178M1510.6 146V178M1480.2 156.7H1520.2M1480.2 167.4H1520.2" stroke="#d2d2d2" stroke-width="1.5" fill="none"/><rect x="1490" y="156" width="20.6" height="12.2" fill="#5aaeee"/><rect x="1491.2" y="157.2" width="18.2" height="9.8" fill="#1f7fd6"/><path d="M1488.4 140.6H1511.4M1488.4 137.8V143.2M1511.4 137.8V143.2" stroke="#4aa3e8" stroke-width="1.6"/><path d="M1495.5 222L1499.4 226.23L1503.3 222" stroke="#fff" stroke-width="1.9" fill="none"/><path d="M1583 146V141.8H1566.6L1575.6 151.9L1566.6 162H1583V157.8" stroke="#d2d2d2" stroke-width="1.5" fill="none"/><path d="M1695.5 150L1699.4 154.23L1703.3 150" stroke="#fff" stroke-width="1.9" fill="none"/><path d="M1564 184.4H1586M1564 180.8H1586V201H1564Z" stroke="#d2d2d2" stroke-width="1.5" fill="none"/><path d="M1575 187.4V197M1570.8 193L1575 197.2L1579.2 193" stroke="#4aa3e8" stroke-width="1.7" fill="none"/><path d="M1620.5 188.4L1624.4 192.63L1628.3 188.4" stroke="#fff" stroke-width="1.9" fill="none"/><path d="M1564.2 232.4L1578.2 219.4L1585.6 226.8L1571.6 240.2Z" stroke="#c86ad0" stroke-width="1.5" fill="none" stroke-linejoin="round"/><path d="M1564.2 232.4L1570.4 226.6L1577.8 234.2L1571.6 240.2Z" fill="#c355cc"/><path d="M1638.8 227.2L1642.7 231.43L1646.6 227.2" stroke="#fff" stroke-width="1.9" fill="none"/><path d="M1748.8 152.4H1771.4V155.6L1762.8 164.6V175H1757.4V164.6L1748.8 155.6Z" stroke="#d2d2d2" stroke-width="1.5" fill="none" stroke-linejoin="round"/><path d="M1768.7 222L1772.6 226.23L1776.5 222" stroke="#fff" stroke-width="1.9" fill="none"/><circle cx="1826.4" cy="157.4" r="15.2" stroke="#d2d2d2" stroke-width="1.6" fill="none"/><path d="M1815.6 168.2L1799 184.6" stroke="#d2d2d2" stroke-width="1.7"/><path d="M1842.7 222L1846.6 226.23L1850.5 222" stroke="#fff" stroke-width="1.9" fill="none"/><rect x="1895.8" y="141.6" width="40.4" height="40.8" stroke="#c9501c" stroke-width="2.2" fill="none"/><rect x="1900.8" y="146.8" width="12.2" height="12.2" stroke="#c9501c" stroke-width="1.6" fill="none"/><rect x="1900.8" y="165.4" width="12.2" height="12.2" stroke="#c9501c" stroke-width="1.6" fill="none"/><rect x="1919.6" y="146.8" width="12.2" height="12.2" stroke="#c9501c" stroke-width="1.6" fill="none"/><rect x="1919.6" y="165.4" width="12.2" height="12.2" stroke="#c9501c" stroke-width="1.6" fill="none"/><path d="M1989.8 142h40.4v40h-40.4ZM2003.27 142v40M2016.73 142v40M1989.8 152h40.4M1989.8 162h40.4M1989.8 172h40.4" stroke="#bdbdbd" stroke-width="1.5" fill="none"/><rect x="1989.8" y="142" width="40.4" height="5.6" fill="#7d7d7d"/><circle cx="2008.4" cy="159" r="12.6" fill="#292929" stroke="#d2d2d2" stroke-width="1.6"/><path d="M2017.4 168L2030.4 182" stroke="#d2d2d2" stroke-width="1.8"/><rect x="2001" y="157.4" width="4" height="7.2" fill="#9a9a9a"/><rect x="2006.2" y="152" width="4" height="12.6" stroke="#d2d2d2" stroke-width="1" fill="none"/><rect x="2011.4" y="154.6" width="4" height="10" fill="#4aa3e8"/><circle cx="2212.6" cy="198.7" r="56.2" fill="#fff"/><rect x="2181.6" y="173" width="61.4" height="53.2" fill="#6165f2"/><rect x="2190" y="180.9" width="18.8" height="15.3" fill="#fff"/><rect x="2190" y="203" width="18.8" height="15.3" fill="#fff"/><rect x="2216.2" y="180.9" width="18.8" height="15.3" fill="#fff"/><rect x="2216.2" y="203" width="18.8" height="15.3" fill="#fff"/><rect x="2426.4" y="154.6" width="9.6" height="28.4" rx="4.8" fill="#fff" stroke="#292929" stroke-width="3.4"/><path d="M2850.3 253.6L2857.2 260.59L2864.1 253.6" stroke="#fff" stroke-width="1.8" fill="none"/></svg>
<div style="left:11px;top:1670px;width:2880px;height:48.4px;background:#0a0a0a;"></div>
<div style="left:11px;top:1718.2px;width:2880px;height:1px;background:#3c3c3c;"></div>
<div style="left:11px;top:1719.2px;width:2880px;height:31.8px;background:#141414;"></div>
<div style="left:2860px;top:278px;width:31px;height:1392px;background:#121212;"></div>
<div style="left:2870.2px;top:304px;width:12px;height:1028px;background:#9a9a9a;border-radius:6px;"></div>
<div style="left:190.8px;top:1683px;line-height:26px;font-size:23px;transform:scaleX(0.8842);transform-origin:0 0;">Contents</div>
<div style="left:298.9px;top:1676.1px;width:127.9px;height:35.8px;background:#ffee6a;border-radius:7px;"></div>
<div style="left:313.8px;top:1683px;line-height:26px;font-size:23px;color:#0c0c0c;transform:scaleX(0.8825);transform-origin:0 0;">Dashboard</div>
<div style="left:440.2px;top:1676.1px;width:105.6px;height:35.8px;background:#ffee6a;border-radius:7px;"></div>
<div style="left:455.2px;top:1683px;line-height:26px;font-size:23px;color:#0c0c0c;transform:scaleX(0.8363);transform-origin:0 0;">Revenue</div>
<div style="left:559.1px;top:1676.1px;width:157.7px;height:35.8px;background:#ffee6a;border-radius:7px;"></div>
<div style="left:572.5px;top:1683px;line-height:26px;font-size:23px;color:#0c0c0c;transform:scaleX(0.8299);transform-origin:0 0;">COGS &amp; OPEX</div>
<div style="left:730.2px;top:1676.1px;width:88.7px;height:35.8px;background:#ffee6a;border-radius:7px;"></div>
<div style="left:744.1px;top:1683px;line-height:26px;font-size:23px;color:#0c0c0c;transform:scaleX(0.8620);transform-origin:0 0;">Payroll</div>
<div style="left:832px;top:1676.1px;width:86.9px;height:35.8px;background:#ffee6a;border-radius:7px;"></div>
<div style="left:845.7px;top:1683px;line-height:26px;font-size:23px;color:#0c0c0c;transform:scaleX(0.7708);transform-origin:0 0;">CAPEX</div>
<div style="left:932px;top:1676.1px;width:113px;height:35.8px;background:#ffee6a;border-radius:7px;"></div>
<div style="left:945.7px;top:1683px;line-height:26px;font-size:23px;color:#0c0c0c;transform:scaleX(0.8757);transform-origin:0 0;">CapTable</div>
<div style="left:1058.2px;top:1676.1px;width:89.8px;height:35.8px;background:#ffee6a;border-radius:7px;"></div>
<div style="left:1071.6px;top:1683px;line-height:26px;font-size:23px;color:#0c0c0c;transform:scaleX(0.8743);transform-origin:0 0;">Capital</div>
<div style="left:1161.1px;top:1676.1px;width:41.9px;height:35.8px;background:#4bb1e6;border-radius:7px;"></div>
<div style="left:1174.63px;top:1683px;line-height:26px;font-size:23px;color:#0c0c0c;transform:scaleX(0.7200);transform-origin:0 0;">IS</div>
<div style="left:1277px;top:1676.1px;width:47.8px;height:35.8px;background:#4bb1e6;border-radius:7px;"></div>
<div style="left:1290.5px;top:1683px;line-height:26px;font-size:23px;color:#0c0c0c;transform:scaleX(0.7200);transform-origin:0 0;">BS</div>
<div style="left:1338.2px;top:1676.1px;width:114.8px;height:35.8px;background:#4bb1e6;border-radius:7px;"></div>
<div style="left:1351.6px;top:1683px;line-height:26px;font-size:23px;color:#0c0c0c;transform:scaleX(0.8477);transform-origin:0 0;">Scenarios</div>
<div style="left:1466.1px;top:1676.1px;width:114.8px;height:35.8px;background:#4bb1e6;border-radius:7px;"></div>
<div style="left:1480px;top:1683px;line-height:26px;font-size:23px;color:#0c0c0c;transform:scaleX(0.9204);transform-origin:0 0;">Valuation</div>
<div style="left:1594.1px;top:1676.1px;width:114.1px;height:35.8px;background:#4bb1e6;border-radius:7px;"></div>
<div style="left:1608.4px;top:1683px;line-height:26px;font-size:23px;color:#0c0c0c;transform:scaleX(0.8810);transform-origin:0 0;">Summary</div>
<div style="left:1720.9px;top:1676.1px;width:48.2px;height:35.8px;background:#4bb1e6;border-radius:7px;"></div>
<div style="left:1734.3px;top:1683px;line-height:26px;font-size:23px;color:#0c0c0c;transform:scaleX(0.7200);transform-origin:0 0;">BE</div>
<div style="left:1782px;top:1676.1px;width:71.9px;height:35.8px;background:#4bb1e6;border-radius:7px;"></div>
<div style="left:1795.9px;top:1683px;line-height:26px;font-size:23px;color:#0c0c0c;transform:scaleX(0.7965);transform-origin:0 0;">ROIC</div>
<div style="left:1866.8px;top:1676.1px;width:85.2px;height:35.8px;background:#4bb1e6;border-radius:7px;"></div>
<div style="left:1880.7px;top:1683px;line-height:26px;font-size:23px;color:#0c0c0c;transform:scaleX(0.8502);transform-origin:0 0;">Charts</div>
<div style="left:1965px;top:1676.1px;width:63.9px;height:35.8px;background:#4bb1e6;border-radius:7px;"></div>
<div style="left:1979.1px;top:1683px;line-height:26px;font-size:23px;color:#0c0c0c;transform:scaleX(0.7514);transform-origin:0 0;">KPIs</div>
<div style="left:2041.8px;top:1676.1px;width:30px;height:35.8px;background:#4bb1e6;border-radius:7px 0 0 7px;"></div>
<div style="left:2054px;top:1683px;width:17.8px;height:26px;overflow:hidden"><div style="left:0.6px;top:0;line-height:25px;font-size:23px;transform:scaleX(0.92);transform-origin:0 0;color:#0c0c0c">Sc</div></div>
<div style="left:292.1px;top:1680.2px;width:1.3px;height:27.4px;background:#5a5a5a;"></div>
<div style="left:433px;top:1680.2px;width:1.3px;height:27.4px;background:#5a5a5a;"></div>
<div style="left:552.4px;top:1680.2px;width:1.3px;height:27.4px;background:#5a5a5a;"></div>
<div style="left:722.8px;top:1680.2px;width:1.3px;height:27.4px;background:#5a5a5a;"></div>
<div style="left:824.6px;top:1680.2px;width:1.3px;height:27.4px;background:#5a5a5a;"></div>
<div style="left:925.1px;top:1680.2px;width:1.3px;height:27.4px;background:#5a5a5a;"></div>
<div style="left:1050.8px;top:1680.2px;width:1.3px;height:27.4px;background:#5a5a5a;"></div>
<div style="left:1153.7px;top:1680.2px;width:1.3px;height:27.4px;background:#5a5a5a;"></div>
<div style="left:1209.2px;top:1680.2px;width:1.3px;height:27.4px;background:#5a5a5a;"></div>
<div style="left:1270.1px;top:1680.2px;width:1.3px;height:27.4px;background:#5a5a5a;"></div>
<div style="left:1331px;top:1680.2px;width:1.3px;height:27.4px;background:#5a5a5a;"></div>
<div style="left:1458.7px;top:1680.2px;width:1.3px;height:27.4px;background:#5a5a5a;"></div>
<div style="left:1586.9px;top:1680.2px;width:1.3px;height:27.4px;background:#5a5a5a;"></div>
<div style="left:1713.9px;top:1680.2px;width:1.3px;height:27.4px;background:#5a5a5a;"></div>
<div style="left:1774.9px;top:1680.2px;width:1.3px;height:27.4px;background:#5a5a5a;"></div>
<div style="left:1859.9px;top:1680.2px;width:1.3px;height:27.4px;background:#5a5a5a;"></div>
<div style="left:1957.8px;top:1680.2px;width:1.3px;height:27.4px;background:#5a5a5a;"></div>
<div style="left:2034.9px;top:1680.2px;width:1.3px;height:27.4px;background:#5a5a5a;"></div>
<div style="left:1216.1px;top:1669px;width:48.2px;height:42.8px;background:#fff;border-radius:0 0 7px 7px;background:linear-gradient(#ffffff 25%,#c9e2f6 100%);"></div>
<div style="left:1228.8px;top:1677px;line-height:26px;font-size:23px;color:#1a1a1a;transform:scaleX(0.7339);transform-origin:0 0;">CF</div>
<div style="left:1228.2px;top:1705.2px;width:23.6px;height:2.8px;background:#1e8e50;"></div>
<div style="left:2216.4px;top:1680px;width:643.6px;height:26.8px;background:#141414;border-radius:13.4px;"></div>
<div style="left:2241.8px;top:1687px;width:159.2px;height:12.4px;background:#9a9a9a;border-radius:6.2px;"></div>
<div style="left:27.5px;top:1726px;line-height:18px;font-size:16.2px;color:#f0f0f0;transform:scaleX(0.8905);transform-origin:0 0;">Ready</div>
<div class="b" style="left:173.4px;top:1726px;line-height:18px;font-size:16.2px;color:#f4f4f4;transform:scaleX(0.9670);transform-origin:0 0;">Accessibility: Investigate</div>
<div style="left:2444.8px;top:1719.2px;width:60.2px;height:31.8px;background:#262626;"></div>
<div style="left:2653px;top:1734.4px;width:148px;height:1.7px;background:#b4b4b4;"></div>
<div style="left:2723.2px;top:1726.2px;width:7.8px;height:17px;background:#c4c4c4;"></div>
<div style="left:2840.8px;top:1726px;line-height:18px;font-size:16.2px;color:#f0f0f0;transform:scaleX(0.9220);transform-origin:0 0;">100%</div>
<svg width="2902" height="1762"><path d="M2869.6 295.6L2876 286.6L2882.4 295.6Z" fill="#9a9a9a" stroke="#9a9a9a" stroke-width="1.4" stroke-linejoin="round"/><path d="M2869.6 1655.2L2876 1664.2L2882.4 1655.2Z" fill="#9a9a9a" stroke="#9a9a9a" stroke-width="1.4" stroke-linejoin="round"/><path d="M54.2 1686L46.6 1693.2L54.2 1700.4" stroke="#8a8a8a" stroke-width="1.6" fill="none"/><path d="M95.6 1686L103.2 1693.2L95.6 1700.4" stroke="#d0d0d0" stroke-width="1.6" fill="none"/><path d="M1216.1 1670H1210.6A5.5 5.5 0 0 1 1216.1 1675.5Z M1264.3 1670H1269.8A5.5 5.5 0 0 0 1264.3 1675.5Z" fill="#fff"/><circle cx="2089.6" cy="1692.8" r="2.2" fill="#e8e8e8"/><circle cx="2095.6" cy="1692.8" r="2.2" fill="#e8e8e8"/><circle cx="2101.6" cy="1692.8" r="2.2" fill="#e8e8e8"/><path d="M2135.2 1692.8H2152M2143.6 1684.4V1701.2" stroke="#fff" stroke-width="1.5"/><rect x="2190" y="1686.8999999999999" width="3.4" height="3.4" fill="#e8e8e8"/><rect x="2190" y="1692.7" width="3.4" height="3.4" fill="#e8e8e8"/><rect x="2190" y="1698.5" width="3.4" height="3.4" fill="#e8e8e8"/><path d="M2233.4 1686.8L2224.4 1693.2L2233.4 1699.6Z" fill="#9a9a9a" stroke="#9a9a9a" stroke-width="1.4" stroke-linejoin="round"/><path d="M2843.8 1686.8L2852.8 1693.2L2843.8 1699.6Z" fill="#9a9a9a" stroke="#9a9a9a" stroke-width="1.4" stroke-linejoin="round"/><path d="M100 1727.6H120.4V1733M100 1731H120.4M100 1727.6V1744.2H108.6M102.8 1735H108.4M102.8 1738.6H107" stroke="#f0f0f0" stroke-width="1.5" fill="none"/><circle cx="114.4" cy="1739" r="5.4" stroke="#f0f0f0" stroke-width="1.5" fill="none"/><circle cx="114.4" cy="1739" r="2.3" fill="#f0f0f0"/><circle cx="155.8" cy="1727.4" r="2.5" stroke="#f0f0f0" stroke-width="1.4" fill="none"/><path d="M147 1730.6C151.4 1733 160.2 1733 164.6 1730.6M152.6 1732.6V1737.6L148.6 1745M159 1732.6V1736.4M155.8 1738.6L152.6 1737.6" stroke="#f0f0f0" stroke-width="1.5" fill="none" stroke-linecap="round"/><path d="M159.6 1737.8L167 1745.2M167 1737.8L159.6 1745.2" stroke="#f0f0f0" stroke-width="1.5"/><rect x="2464" y="1724" width="2" height="20" fill="#fff"/><rect x="2464" y="1724" width="20" height="2" fill="#fff"/><rect x="2470" y="1724" width="2" height="20" fill="#fff"/><rect x="2464" y="1730" width="20" height="2" fill="#fff"/><rect x="2476" y="1724" width="2" height="20" fill="#fff"/><rect x="2464" y="1736" width="20" height="2" fill="#fff"/><rect x="2482" y="1724" width="2" height="20" fill="#fff"/><rect x="2464" y="1742" width="20" height="2" fill="#fff"/><rect x="2524" y="1724" width="22" height="2" fill="#fff"/><rect x="2524" y="1742" width="22" height="2" fill="#fff"/><rect x="2524" y="1726" width="2" height="16" fill="#fff"/><rect x="2544" y="1726" width="2" height="16" fill="#fff"/><rect x="2529" y="1728.5" width="12" height="1.6" fill="#fff"/><rect x="2529" y="1739.4" width="12" height="1.6" fill="#fff"/><rect x="2529" y="1730.1" width="1.6" height="9.3" fill="#fff"/><rect x="2539.4" y="1730.1" width="1.6" height="9.3" fill="#fff"/><rect x="2531.5" y="1732" width="7" height="1.4" fill="#fff"/><rect x="2531.5" y="1735.6" width="7" height="1.4" fill="#fff"/><rect x="2584" y="1724" width="22" height="2" fill="#fff"/><rect x="2584" y="1742" width="22" height="2" fill="#fff"/><rect x="2584" y="1726" width="2" height="16" fill="#fff"/><rect x="2604" y="1726" width="2" height="16" fill="#fff"/><rect x="2586" y="1736.2" width="12.6" height="2" fill="#fff"/><rect x="2590.4" y="1726" width="2" height="10.4" fill="#fff"/><rect x="2596.6" y="1726" width="2" height="10.4" fill="#fff"/><path d="M2633 1734.6H2645" stroke="#e8e8e8" stroke-width="1.3"/><path d="M2809.2 1735.2H2820.6M2814.9 1729.5V1740.9" stroke="#e8e8e8" stroke-width="1.4"/></svg>
</div></body></html>
